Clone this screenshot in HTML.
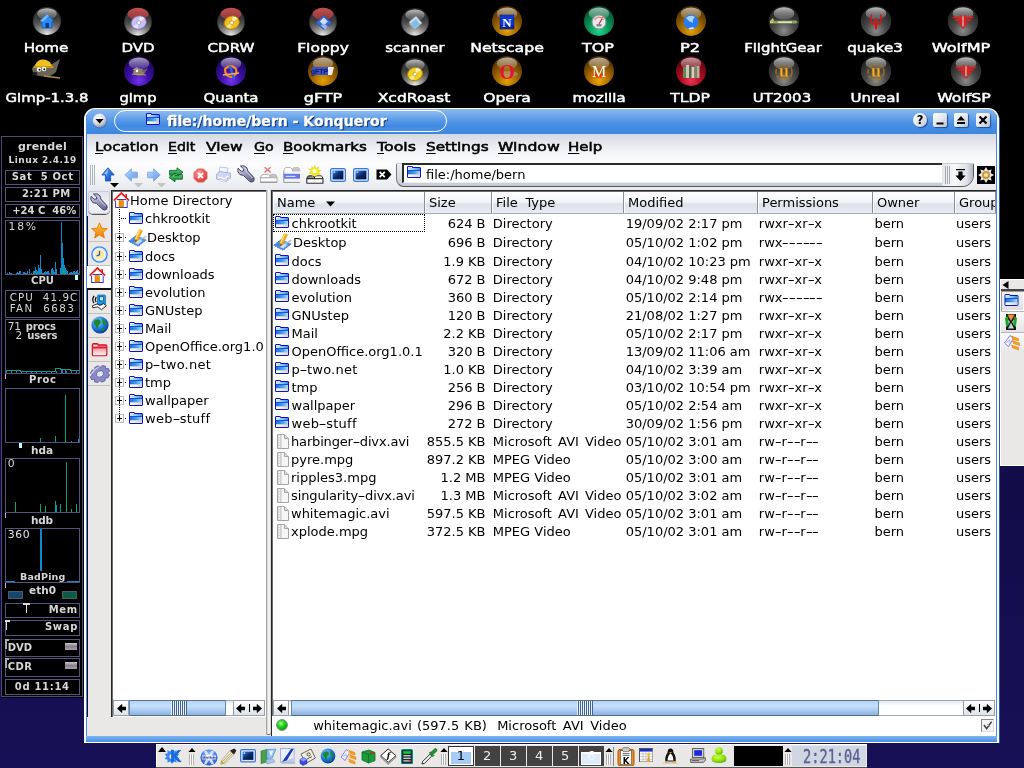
<!DOCTYPE html>
<html lang="en"><head><meta charset="utf-8"><title>file:/home/bern - Konqueror</title>
<style>
html,body{margin:0;padding:0}
body{width:1024px;height:768px;overflow:hidden;position:relative;background:#000;font-family:"DejaVu Sans","Liberation Sans",sans-serif;font-size:13px;color:#000}
.abs{position:absolute}
#root{position:absolute;left:0;top:0;width:1024px;height:768px;overflow:hidden;will-change:transform}
#desk{position:absolute;left:0;top:0;width:1024px;height:768px;background:linear-gradient(to bottom,#000 0,#000 285px,#0c0836 380px,#120c48 470px,#171056 768px)}
.dl{position:absolute;width:120px;text-align:center;color:#fff;font:12.3px "DejaVu Sans","Liberation Sans",sans-serif;-webkit-text-stroke:.45px #fff;line-height:14px;white-space:nowrap;transform:scaleX(1.08);transform-origin:50% 50%}
.di{position:absolute;width:32px;height:32px}
#gk{position:absolute;left:0;top:134px;width:84px;height:564px;background:linear-gradient(to right,transparent 0,transparent 1px,#000 1px,#000 100%);}
#gk .ob{position:absolute;left:1px;top:2px;width:82px;height:561px;border:1px solid #4c4a74;box-sizing:border-box}
.gb{position:absolute;left:5px;width:75px;border:1px solid #55527e;box-sizing:border-box;background:#000;overflow:hidden}
.gt{position:absolute;left:0;width:84px;text-align:center;color:#d6d6d6;font:bold 11px "DejaVu Sans","Liberation Sans",sans-serif;line-height:12px;white-space:pre;letter-spacing:.6px}
.gtl{position:absolute;color:#d6d6d6;font:bold 11px "DejaVu Sans","Liberation Sans",sans-serif;line-height:12px;white-space:pre;letter-spacing:.6px}
.gx{position:absolute;white-space:pre}
#win{position:absolute;left:84px;top:108px;width:915px;height:635px;background:#fff;border-radius:11px 11px 0 0;}
#win .inner{position:absolute;left:2px;top:1px;width:911px;height:633px;background:#eae8e6;border-radius:9px 9px 0 0;overflow:hidden}
#tbar{position:absolute;left:0;top:0;width:911px;height:25px;background:linear-gradient(to bottom,#8ab8ee 0,#6aa4ea 30%,#4a90e4 60%,#3a86e2 100%)}
#pill{position:absolute;left:28px;top:1px;width:331px;height:20px;border:1.6px solid #fff;border-radius:11px;background:linear-gradient(to bottom,#8fbcf0 0,#5a9ae8 45%,#4088e2 75%,#4a90e6 100%)}
.ft{position:absolute;white-space:pre;transform-origin:0 0;line-height:16px}
#mbar{position:absolute;left:1px;top:25px;width:910px;height:57px;background:linear-gradient(to bottom,#d4d8e0 0,#e4e6ec 8px,#f6f7f9 20px,#fcfcfd 30px,#f4f5f7 42px,#e6e8ee 57px)}
.lframe{position:absolute;left:0;top:0;width:1px;height:633px;background:#4a8ae0}
.rframe{position:absolute;left:910px;top:0;width:1px;height:633px;background:#4a8ae0}
.bframe{position:absolute;left:0;top:627px;width:911px;height:6px;background:linear-gradient(to bottom,#7cb6f2,#4a8fe2)}
.lv{position:absolute;background:#fff;}
.row{position:absolute;white-space:pre;line-height:16px;font-size:13px}
.hd{position:absolute;top:0;height:22px;box-sizing:border-box;border-right:1px solid #8a8e96;border-left:1px solid #fff;background:linear-gradient(to bottom,#fff 0,#f2f4f8 45%,#dde2ea 55%,#e8ecf2 100%);font-size:13px;line-height:21px;padding-left:3px;white-space:pre;overflow:hidden}
#kick{position:absolute;left:156px;top:744px;width:711px;height:24px;background:#eae8e6;box-shadow:inset 1px 1px 0 #fff;border-bottom:1px solid #555;box-sizing:border-box;overflow:hidden}
.pg{position:absolute;top:2px;height:20px;background:#424242;color:#eee;font:13px "DejaVu Sans","Liberation Sans",sans-serif;line-height:19px;text-align:center}
#ext{position:absolute;left:1000px;top:279px;width:24px;height:187px;background:#eae8e6;box-shadow:inset 1px 1px 0 #fff;border-bottom:1px solid #fff;box-sizing:border-box;overflow:hidden}
.hy{display:inline-block;width:6.7px;text-align:center;transform:scaleX(1.5)}
.hn{display:inline-block;width:7px;text-align:center;transform:scaleX(1.7);letter-spacing:0}

</style></head>
<body>
<div id="root">
<svg width="0" height="0" style="position:absolute" aria-hidden="true">
<defs>
<radialGradient id="sgGray" cx="50%" cy="82%" r="78%"><stop offset="0" stop-color="#8c8c8c"/><stop offset=".42" stop-color="#4a4a4a"/><stop offset="1" stop-color="#1a1a1a"/></radialGradient>
<radialGradient id="sgGlass" cx="50%" cy="50%" r="50%"><stop offset="0" stop-color="#161616"/><stop offset=".6" stop-color="#242424"/><stop offset=".85" stop-color="#3c3c3c"/><stop offset="1" stop-color="#222"/></radialGradient>
<radialGradient id="sgGold" cx="50%" cy="82%" r="78%"><stop offset="0" stop-color="#e4a400"/><stop offset=".42" stop-color="#a66a00"/><stop offset="1" stop-color="#482a00"/></radialGradient>
<radialGradient id="sgPurple" cx="50%" cy="82%" r="78%"><stop offset="0" stop-color="#7434ec"/><stop offset=".42" stop-color="#3e10ac"/><stop offset="1" stop-color="#18044c"/></radialGradient>
<radialGradient id="sgGreen" cx="50%" cy="82%" r="78%"><stop offset="0" stop-color="#20d890"/><stop offset=".42" stop-color="#0a985a"/><stop offset="1" stop-color="#044c2c"/></radialGradient>
<radialGradient id="sgRed" cx="50%" cy="82%" r="78%"><stop offset="0" stop-color="#e83656"/><stop offset=".42" stop-color="#b60c20"/><stop offset="1" stop-color="#4c040c"/></radialGradient>
<radialGradient id="sgOrange" cx="50%" cy="82%" r="78%"><stop offset="0" stop-color="#eca800"/><stop offset=".42" stop-color="#b06c00"/><stop offset="1" stop-color="#482a00"/></radialGradient>
<radialGradient id="glow" cx="50%" cy="100%" r="75%"><stop offset="0" stop-color="#fff" stop-opacity=".32"/><stop offset=".55" stop-color="#fff" stop-opacity=".08"/><stop offset="1" stop-color="#fff" stop-opacity="0"/></radialGradient>
<radialGradient id="gglow" cx="50%" cy="100%" r="78%"><stop offset="0" stop-color="#f0f0f0" stop-opacity="1"/><stop offset=".4" stop-color="#b8b8b8" stop-opacity=".7"/><stop offset="1" stop-color="#888" stop-opacity="0"/></radialGradient>
<linearGradient id="hlGray" x1="0" y1="0" x2="0" y2="1"><stop offset="0" stop-color="#c4c4c4" stop-opacity=".95"/><stop offset="1" stop-color="#8a8a8a" stop-opacity=".35"/></linearGradient>
<linearGradient id="hl" x1="0" y1="0" x2="0" y2="1"><stop offset="0" stop-color="#fff" stop-opacity=".62"/><stop offset="1" stop-color="#fff" stop-opacity=".1"/></linearGradient>
<linearGradient id="hlRed" x1="0" y1="0" x2="0" y2="1"><stop offset="0" stop-color="#c45050" stop-opacity="1"/><stop offset="1" stop-color="#a83a3a" stop-opacity=".8"/></linearGradient>
<linearGradient id="fold1" x1="0" y1="0" x2="1" y2="0"><stop offset="0" stop-color="#1a6ae0"/><stop offset=".55" stop-color="#4aa0f0"/><stop offset="1" stop-color="#b8e0ff"/></linearGradient>
<linearGradient id="fold2" x1="0" y1="0" x2="1" y2="0"><stop offset="0" stop-color="#fff"/><stop offset="1" stop-color="#d8d4c0"/></linearGradient>
<linearGradient id="fold3" x1="0" y1="0" x2="1" y2="0"><stop offset="0" stop-color="#d8ecff"/><stop offset=".5" stop-color="#8cc4f8"/><stop offset="1" stop-color="#3a8ae8"/></linearGradient>
<symbol id="folder" viewBox="0 0 16 16">
<path d="M1.5 12 L1.5 2 Q1.5 1.5 2 1.5 L6 1.5 Q6.5 1.5 6.5 2 L6.5 2.5 L14 2.5 Q14.5 2.5 14.5 3 L14.5 12 Q14.5 12.5 14 12.5 L2 12.5 Q1.5 12.5 1.5 12 Z" fill="url(#fold1)" stroke="#1212c0" stroke-width="1"/>
<rect x="2" y="2" width="4" height="1.2" fill="#d8ecff"/>
<rect x="2" y="3" width="12" height="2" fill="url(#fold3)"/>
<rect x="2" y="5" width="12" height="1" fill="#1a50d4"/>
<rect x="2" y="9.3" width="12" height="2.7" fill="url(#fold2)"/>
</symbol>
<symbol id="file" viewBox="0 0 16 16">
<path d="M3.5 1.5 L10.5 1.5 L14.5 5.5 L14.5 15.5 L3.5 15.5 Z" fill="#f6f6f6" stroke="#a4a4a4" stroke-width="1"/>
<path d="M10.5 1.5 L10.5 5.5 L14.5 5.5" fill="#dcdcdc" stroke="#a4a4a4" stroke-width="1"/>
<rect x="4" y="2" width="2.6" height="13" fill="#d4d4d4"/>
<path d="M5.3 2.6 V15" stroke="#fff" stroke-width="1.2" stroke-dasharray="1.4 1.2"/>
<rect x="6.6" y="2" width=".8" height="13" fill="#b8b8b8"/>
</symbol>
</defs>
</svg>
<div id="desk"></div>
<svg class="abs" style="left:28.5px;top:3.3000000000000007px" width="36" height="36" viewBox="0 0 36 36"><circle cx="18.0" cy="18.0" r="14.3" fill="url(#sgGlass)"/><circle cx="18.0" cy="18.0" r="13.9" fill="url(#gglow)"/><ellipse cx="18.0" cy="10.85" rx="9.8098" ry="5.720000000000001" fill="url(#hlGray)"/><g transform="translate(18 19)"><path d="M-7 -1 L0 -8 L7 -1 L5 -1 L5 6 L-5 6 L-5 -1 Z" fill="#2a8af0" stroke="#1058c0" stroke-width=".8"/><path d="M-7 -1 L0 -8 L2 -6 L-4 0 Z" fill="#6ab8ff"/><rect x="-1.5" y="1" width="3.5" height="5" fill="#0a3a90"/></g></svg>
<div class="dl" style="left:-14.0px;top:41.0px;transform:scaleX(1.230)">Home</div>
<svg class="abs" style="left:120.30000000000001px;top:3.6999999999999993px" width="36" height="36" viewBox="0 0 36 36"><circle cx="18.0" cy="18.0" r="14" fill="url(#sgGlass)"/><circle cx="18.0" cy="18.0" r="13.6" fill="url(#gglow)"/><ellipse cx="18.0" cy="10.0" rx="10.485999999999999" ry="6.16" fill="url(#hlRed)"/><g transform="translate(18.8 18.6) rotate(-20) scale(1 .86)"><circle r="7.6" fill="#c8c0f0" stroke="#8078c0" stroke-width="1"/><path d="M0 0 L7 -2 A7 7 0 0 0 3 -6.3 Z" fill="#fff" opacity=".7"/><path d="M0 0 L-7 2 A7 7 0 0 0 -3 6.3 Z" fill="#fff" opacity=".5"/><circle r="2" fill="#fff" stroke="#8078c0" stroke-width=".6"/></g></svg>
<div class="dl" style="left:77.5px;top:41.0px;transform:scaleX(1.223)">DVD</div>
<svg class="abs" style="left:212.8px;top:3.6999999999999993px" width="36" height="36" viewBox="0 0 36 36"><circle cx="18.0" cy="18.0" r="14" fill="url(#sgGlass)"/><circle cx="18.0" cy="18.0" r="13.6" fill="url(#gglow)"/><ellipse cx="18.0" cy="10.0" rx="10.485999999999999" ry="6.16" fill="url(#hlRed)"/><g transform="translate(18.8 18.6) rotate(-20) scale(1 .86)"><circle r="7.6" fill="#f0c020" stroke="#b08000" stroke-width="1"/><path d="M0 0 L7 -2 A7 7 0 0 0 3 -6.3 Z" fill="#fff" opacity=".7"/><path d="M0 0 L-7 2 A7 7 0 0 0 -3 6.3 Z" fill="#fff" opacity=".5"/><circle r="2" fill="#fff" stroke="#b08000" stroke-width=".6"/></g></svg>
<div class="dl" style="left:171.0px;top:41.0px;transform:scaleX(1.226)">CDRW</div>
<svg class="abs" style="left:305.3px;top:3.6999999999999993px" width="36" height="36" viewBox="0 0 36 36"><circle cx="18.0" cy="18.0" r="14" fill="url(#sgGlass)"/><circle cx="18.0" cy="18.0" r="13.6" fill="url(#gglow)"/><ellipse cx="18.0" cy="10.0" rx="10.485999999999999" ry="6.16" fill="url(#hlRed)"/><g transform="translate(18.8 18.6)"><path d="M-8 0 L0 -7 L8 0 L0 7 Z" fill="#3a6ad8" stroke="#2040a0" stroke-width=".6"/><path d="M-4 -1 L0 -5 L4 -1 L0 3 Z" fill="#d0e0ff"/><path d="M-3 3 L1 7 L4 4 L0 1 Z" fill="#9ab8f0"/></g></svg>
<div class="dl" style="left:262.7px;top:41.0px;transform:scaleX(1.264)">Floppy</div>
<svg class="abs" style="left:396.5px;top:3.5px" width="36" height="36" viewBox="0 0 36 36"><circle cx="18.0" cy="18.0" r="14" fill="url(#sgGlass)"/><circle cx="18.0" cy="18.0" r="13.6" fill="url(#gglow)"/><ellipse cx="18.0" cy="11.0" rx="9.604" ry="5.6000000000000005" fill="url(#hlGray)"/><g transform="translate(18 19)"><path d="M-6 -1 L1 -7 L7 0 L0 6 Z" fill="#d8e0e8" stroke="#8090a0" stroke-width=".6"/><path d="M-4 0 L1 -4 L5 1 L0 5 Z" fill="#7ac0e8"/><path d="M-6 -1 L0 6 L0 8 L-6 1 Z" fill="#a0a8b0"/></g></svg>
<div class="dl" style="left:354.6px;top:41.0px;transform:scaleX(1.214)">scanner</div>
<svg class="abs" style="left:489.0px;top:3.0px" width="36" height="36" viewBox="0 0 36 36"><circle cx="18.0" cy="18.0" r="15" fill="url(#sgGold)"/><ellipse cx="18.0" cy="10.5" rx="10.29" ry="6.0" fill="url(#hl)"/><g transform="translate(18 19)"><rect x="-7" y="-7" width="14" height="14" fill="#1038d0" stroke="#08208a" stroke-width=".6"/><rect x="-7" y="3" width="14" height="4" fill="#0a2498"/><text x="0" y="4.5" text-anchor="middle" font-family="Liberation Serif,serif" font-weight="bold" font-size="13" fill="#fff">N</text></g></svg>
<div class="dl" style="left:446.7px;top:41.0px;transform:scaleX(1.278)">Netscape</div>
<svg class="abs" style="left:581.0px;top:3.0px" width="36" height="36" viewBox="0 0 36 36"><circle cx="18.0" cy="18.0" r="15" fill="url(#sgGreen)"/><ellipse cx="18.0" cy="10.5" rx="10.29" ry="6.0" fill="url(#hl)"/><g transform="translate(18 19)"><circle r="7" fill="#e8e8e8" stroke="#909090" stroke-width="1"/><path d="M0 2 L4 -5" stroke="#d03030" stroke-width="1.2"/><path d="M-4.5 -2 A5 5 0 0 1 4.5 -2" fill="none" stroke="#e09090" stroke-width="1.4"/><rect x="-2.5" y="2" width="5" height="2.5" fill="#8088a0"/></g></svg>
<div class="dl" style="left:538.4px;top:41.0px;transform:scaleX(1.296)">TOP</div>
<svg class="abs" style="left:672.7px;top:3.0px" width="36" height="36" viewBox="0 0 36 36"><circle cx="18.0" cy="18.0" r="15" fill="url(#sgGold)"/><ellipse cx="18.0" cy="10.5" rx="10.29" ry="6.0" fill="url(#hl)"/><g transform="translate(18 19)"><circle r="7.5" fill="#2a7af0"/><path d="M-5 -4 Q-1 -8 4 -5 Q1 -2 2 1 Q-2 0 -5 -4 Z" fill="#a8d8ff"/><path d="M-3 7 Q0 4 4 6 Q1 8 -3 7Z" fill="#e0f0ff"/></g></svg>
<div class="dl" style="left:630.0px;top:41.0px;transform:scaleX(1.325)">P2</div>
<svg class="abs" style="left:765.5px;top:3.0px" width="36" height="36" viewBox="0 0 36 36"><circle cx="18.0" cy="18.0" r="15.2" fill="url(#sgGray)"/><ellipse cx="18.0" cy="10.4" rx="10.4272" ry="6.08" fill="url(#hlGray)"/><g transform="translate(18 19)"><path d="M-14 -1 L12 -1.5 L14 0 L12 1.5 L-14 1.5 Z" fill="#88a860"/><path d="M-14 -1 L-11 -4 L-10 -1Z" fill="#c8c060"/><rect x="-6" y="-.5" width="14" height="1.4" fill="#e8e8c8"/><rect x="-14" y="-.6" width="3" height="1.6" fill="#e0d040"/></g></svg>
<div class="dl" style="left:722.7px;top:41.0px;transform:scaleX(1.214)">FlightGear</div>
<svg class="abs" style="left:857.5px;top:3.0px" width="36" height="36" viewBox="0 0 36 36"><circle cx="18.0" cy="18.0" r="15.2" fill="url(#sgGray)"/><ellipse cx="18.0" cy="10.4" rx="10.4272" ry="6.08" fill="url(#hlGray)"/><g transform="translate(18 17.5)" fill="none" stroke="#e01010" stroke-width="1.6"><path d="M-4.6 -6 Q-7.4 2.6 0 4 Q7.4 2.6 4.6 -6"/><path d="M0 -2.6 L0 9" stroke-width="2"/></g></svg>
<div class="dl" style="left:815.0px;top:41.0px;transform:scaleX(1.232)">quake3</div>
<svg class="abs" style="left:944.5px;top:3.0px" width="36" height="36" viewBox="0 0 36 36"><circle cx="18.0" cy="18.0" r="15.2" fill="url(#sgGray)"/><ellipse cx="18.0" cy="10.4" rx="10.4272" ry="6.08" fill="url(#hlGray)"/><g transform="translate(18 19.3)" fill="#e41c1c"><path d="M-11 -5.5 L11 -5.5 L9.4 -3.8 L-9.4 -3.8Z"/><path d="M-8.6 -3 L8.6 -3 L7 -1.4 L-7 -1.4Z"/><path d="M-6 -.6 L6 -.6 L4.6 1 L-4.6 1Z"/><path d="M-3.2 -7 L-1.3 -7 L-1.3 4 L0 5.4 L1.3 4 L1.3 -7 L3.2 -7 L3.2 3.4 L0 6.8 L-3.2 3.4Z"/><rect x="-.5" y="-6" width="1" height="9.6" fill="#f4dcdc"/></g></svg>
<div class="dl" style="left:901.0px;top:41.0px;transform:scaleX(1.312)">WolfMP</div>
<svg class="abs" style="left:30px;top:58px" width="34" height="24" viewBox="0 0 34 24"><path d="M2 11 Q4 5 12 6 L22 6 L30 1 L26 14 Q20 20 10 18 Q3 18 2 11Z" fill="#6a6456"/><path d="M5 7 Q10 -2 20 4 L22 8 L6 9Z" fill="#f0c020"/><path d="M4 8 L23 8 L24 10 L3 10Z" fill="#c89810"/><circle cx="9" cy="11.5" r="2.3" fill="#fff"/><circle cx="14" cy="11" r="2.3" fill="#fff"/><circle cx="9.5" cy="11.8" r="1" fill="#000"/><circle cx="14.3" cy="11.3" r="1" fill="#000"/><ellipse cx="5" cy="15.5" rx="2.4" ry="1.8" fill="#222"/><path d="M14 18 L30 20" stroke="#b08848" stroke-width="1.5"/></svg>
<div class="dl" style="left:-13.5px;top:91.0px;transform:scaleX(1.215)">Gimp-1.3.8</div>
<svg class="abs" style="left:121.0px;top:53.0px" width="36" height="36" viewBox="0 0 36 36"><circle cx="18.0" cy="18.0" r="15" fill="url(#sgPurple)"/><ellipse cx="18.0" cy="10.5" rx="10.29" ry="6.0" fill="url(#hl)"/><g transform="translate(18 19)"><ellipse cx="0" cy="0" rx="6" ry="3.5" fill="#8a8068"/><path d="M-7 -2 L-2 -5 L1 -2Z" fill="#a09878"/><path d="M2 -1 L9 -4 L6 1Z" fill="#6a6250"/><circle cx="-2" cy="-1" r="1.3" fill="#fff"/><path d="M-7 2 L7 3" stroke="#c0a050" stroke-width="1"/></g></svg>
<div class="dl" style="left:78.0px;top:91.0px;transform:scaleX(1.199)">gimp</div>
<svg class="abs" style="left:213.0px;top:53.0px" width="36" height="36" viewBox="0 0 36 36"><circle cx="18.0" cy="18.0" r="15" fill="url(#sgPurple)"/><ellipse cx="18.0" cy="10.5" rx="10.29" ry="6.0" fill="url(#hl)"/><g transform="translate(18 19)"><path d="M-6 -3 Q0 -9 5 -3 Q7 3 0 5 Q-6 4 -6 -3Z" fill="none" stroke="#f09020" stroke-width="2.2"/><path d="M-1 -6 L3 7" stroke="#3060e0" stroke-width="2.4"/><path d="M-8 3 L8 1" stroke="#f0b040" stroke-width="1.6"/></g></svg>
<div class="dl" style="left:171.0px;top:91.0px;transform:scaleX(1.222)">Quanta</div>
<svg class="abs" style="left:305.0px;top:53.0px" width="36" height="36" viewBox="0 0 36 36"><circle cx="18.0" cy="18.0" r="15" fill="url(#sgGold)"/><ellipse cx="18.0" cy="10.5" rx="10.29" ry="6.0" fill="url(#hl)"/><g transform="translate(18 18)"><path d="M-11 -4 L11 -4 L9 4 L-11 4 Z" fill="#e8ecf8"/><rect x="-11" y="-4" width="16" height="8" fill="#3a52c8"/><text x="-3.5" y="2.8" text-anchor="middle" font-family="Liberation Sans,sans-serif" font-weight="bold" font-size="7" fill="#101860">gFTP</text></g></svg>
<div class="dl" style="left:262.5px;top:91.0px;transform:scaleX(1.301)">gFTP</div>
<svg class="abs" style="left:396.5px;top:53.5px" width="36" height="36" viewBox="0 0 36 36"><circle cx="18.0" cy="18.0" r="14" fill="url(#sgGlass)"/><circle cx="18.0" cy="18.0" r="13.6" fill="url(#gglow)"/><ellipse cx="18.0" cy="11.0" rx="9.604" ry="5.6000000000000005" fill="url(#hlGray)"/><g transform="translate(18 20) rotate(-20) scale(1 .86)"><circle r="7.6" fill="#f0d020" stroke="#b08000" stroke-width="1"/><path d="M0 0 L7 -2 A7 7 0 0 0 3 -6.3 Z" fill="#fff" opacity=".7"/><path d="M0 0 L-7 2 A7 7 0 0 0 -3 6.3 Z" fill="#fff" opacity=".5"/><circle r="2" fill="#fff" stroke="#b08000" stroke-width=".6"/></g></svg>
<div class="dl" style="left:353.7px;top:91.0px;transform:scaleX(1.269)">XcdRoast</div>
<svg class="abs" style="left:489.0px;top:53.0px" width="36" height="36" viewBox="0 0 36 36"><circle cx="18.0" cy="18.0" r="15" fill="url(#sgGold)"/><ellipse cx="18.0" cy="10.5" rx="10.29" ry="6.0" fill="url(#hl)"/><g transform="translate(18 19)"><ellipse cx="2" cy="2" rx="9" ry="3" fill="#a0a0b0" opacity=".5"/><text x="0" y="7" text-anchor="middle" font-family="Liberation Serif,serif" font-weight="bold" font-size="20" fill="#e81030">O</text></g></svg>
<div class="dl" style="left:447.0px;top:91.0px;transform:scaleX(1.267)">Opera</div>
<svg class="abs" style="left:581.0px;top:53.0px" width="36" height="36" viewBox="0 0 36 36"><circle cx="18.0" cy="18.0" r="15" fill="url(#sgOrange)"/><ellipse cx="18.0" cy="10.5" rx="10.29" ry="6.0" fill="url(#hl)"/><g transform="translate(18 19)"><path d="M-7 3 Q-3 0 0 2.6 Q4 0 7 3 Q4 6.4 0 5.6 Q-4 6.4 -7 3Z" fill="#e83808"/><text x="0" y="5" text-anchor="middle" font-family="Liberation Serif,serif" font-size="16" fill="#fff">M</text></g></svg>
<div class="dl" style="left:538.5px;top:91.0px;transform:scaleX(1.216)">mozilla</div>
<svg class="abs" style="left:673.0px;top:53.0px" width="36" height="36" viewBox="0 0 36 36"><circle cx="18.0" cy="18.0" r="15" fill="url(#sgRed)"/><ellipse cx="18.0" cy="10.5" rx="10.29" ry="6.0" fill="url(#hl)"/><g transform="translate(18 19)"><rect x="-8" y="-5" width="3" height="11" fill="#5a8a60"/><rect x="-5" y="-7" width="3" height="13" fill="#c8c8b0"/><rect x="-2" y="-6" width="2.5" height="12" fill="#486850"/><rect x=".5" y="-5" width="3" height="11" fill="#d8d0b8"/><rect x="3.5" y="-7" width="2.5" height="13" fill="#708870"/><rect x="6" y="-6" width="2.5" height="12" fill="#b8b098"/></g></svg>
<div class="dl" style="left:630.0px;top:91.0px;transform:scaleX(1.270)">TLDP</div>
<svg class="abs" style="left:765.5px;top:53.0px" width="36" height="36" viewBox="0 0 36 36"><circle cx="18.0" cy="18.0" r="15.2" fill="url(#sgGray)"/><ellipse cx="18.0" cy="10.4" rx="10.4272" ry="6.08" fill="url(#hlGray)"/><g transform="translate(18 19)"><circle r="8" fill="none" stroke="#b07818" stroke-width="1.6" stroke-dasharray="5 2 3 1.5" opacity=".75"/><text x="0" y="5.4" text-anchor="middle" font-family="Liberation Serif,serif" font-weight="bold" font-size="18" fill="#f0b028" stroke="#a86808" stroke-width=".5">u</text></g></svg>
<div class="dl" style="left:722.4px;top:91.0px;transform:scaleX(1.224)">UT2003</div>
<svg class="abs" style="left:857.5px;top:53.0px" width="36" height="36" viewBox="0 0 36 36"><circle cx="18.0" cy="18.0" r="15.2" fill="url(#sgGray)"/><ellipse cx="18.0" cy="10.4" rx="10.4272" ry="6.08" fill="url(#hlGray)"/><g transform="translate(18 19)"><circle r="8" fill="none" stroke="#b07818" stroke-width="1.6" stroke-dasharray="5 2 3 1.5" opacity=".75"/><text x="0" y="5.4" text-anchor="middle" font-family="Liberation Serif,serif" font-weight="bold" font-size="18" fill="#f0b028" stroke="#a86808" stroke-width=".5">u</text></g></svg>
<div class="dl" style="left:814.5px;top:91.0px;transform:scaleX(1.227)">Unreal</div>
<svg class="abs" style="left:947.5px;top:53.0px" width="36" height="36" viewBox="0 0 36 36"><circle cx="18.0" cy="18.0" r="15.2" fill="url(#sgGray)"/><ellipse cx="18.0" cy="10.4" rx="10.4272" ry="6.08" fill="url(#hlGray)"/><g transform="translate(18 19.3)" fill="#e41c1c"><path d="M-11 -5.5 L11 -5.5 L9.4 -3.8 L-9.4 -3.8Z"/><path d="M-8.6 -3 L8.6 -3 L7 -1.4 L-7 -1.4Z"/><path d="M-6 -.6 L6 -.6 L4.6 1 L-4.6 1Z"/><path d="M-3.2 -7 L-1.3 -7 L-1.3 4 L0 5.4 L1.3 4 L1.3 -7 L3.2 -7 L3.2 3.4 L0 6.8 L-3.2 3.4Z"/><rect x="-.5" y="-6" width="1" height="9.6" fill="#f4dcdc"/></g></svg>
<div class="dl" style="left:903.7px;top:91.0px;transform:scaleX(1.280)">WolfSP</div>
<div id="gk"><div class="ob"></div>
<div class="gb" style="top:36px;height:15px"></div>
<div class="gb" style="top:53px;height:15px"></div>
<div class="gb" style="top:70px;height:14px"></div>
<div class="gb" style="top:86px;height:55px"><svg class="abs" style="left:0;top:0" width="73" height="53" viewBox="0 0 73 53" shape-rendering="crispEdges"><rect x="1" y="52" width="1" height="1" fill="#1088d0"/><rect x="3" y="51" width="1" height="2" fill="#1088d0"/><rect x="4" y="52" width="1" height="1" fill="#1088d0"/><rect x="5" y="52" width="1" height="1" fill="#1088d0"/><rect x="10" y="52" width="1" height="1" fill="#1088d0"/><rect x="11" y="51" width="1" height="2" fill="#1088d0"/><rect x="12" y="52" width="1" height="1" fill="#1088d0"/><rect x="13" y="50" width="1" height="3" fill="#1088d0"/><rect x="14" y="50" width="1" height="3" fill="#1088d0"/><rect x="17" y="51" width="1" height="2" fill="#1088d0"/><rect x="18" y="51" width="1" height="2" fill="#1088d0"/><rect x="19" y="52" width="1" height="1" fill="#1088d0"/><rect x="20" y="52" width="1" height="1" fill="#1088d0"/><rect x="21" y="50" width="1" height="3" fill="#1088d0"/><rect x="23" y="50" width="1" height="3" fill="#1088d0"/><rect x="25" y="52" width="1" height="1" fill="#1088d0"/><rect x="28" y="50" width="1" height="3" fill="#1088d0"/><rect x="29" y="51" width="1" height="2" fill="#1088d0"/><rect x="30" y="50" width="1" height="3" fill="#1088d0"/><rect x="31" y="52" width="1" height="1" fill="#1088d0"/><rect x="32" y="50" width="1" height="3" fill="#1088d0"/><rect x="33" y="52" width="1" height="1" fill="#1088d0"/><rect x="36" y="52" width="1" height="1" fill="#1088d0"/><rect x="37" y="52" width="1" height="1" fill="#1088d0"/><rect x="38" y="51" width="1" height="2" fill="#1088d0"/><rect x="39" y="50" width="1" height="3" fill="#1088d0"/><rect x="40" y="51" width="1" height="2" fill="#1088d0"/><rect x="41" y="50" width="1" height="3" fill="#1088d0"/><rect x="42" y="50" width="1" height="3" fill="#1088d0"/><rect x="43" y="52" width="1" height="1" fill="#1088d0"/><rect x="45" y="50" width="1" height="3" fill="#1088d0"/><rect x="46" y="51" width="1" height="2" fill="#1088d0"/><rect x="47" y="52" width="1" height="1" fill="#1088d0"/><rect x="48" y="51" width="1" height="2" fill="#1088d0"/><rect x="49" y="52" width="1" height="1" fill="#1088d0"/><rect x="50" y="51" width="1" height="2" fill="#1088d0"/><rect x="54" y="52" width="1" height="1" fill="#1088d0"/><rect x="55" y="52" width="1" height="1" fill="#1088d0"/><rect x="57" y="50" width="1" height="3" fill="#1088d0"/><rect x="58" y="50" width="1" height="3" fill="#1088d0"/><rect x="59" y="51" width="1" height="2" fill="#1088d0"/><rect x="60" y="50" width="1" height="3" fill="#1088d0"/><rect x="61" y="52" width="1" height="1" fill="#1088d0"/><rect x="63" y="52" width="1" height="1" fill="#1088d0"/><rect x="64" y="51" width="1" height="2" fill="#1088d0"/><rect x="65" y="51" width="1" height="2" fill="#1088d0"/><rect x="66" y="52" width="1" height="1" fill="#1088d0"/><rect x="67" y="50" width="1" height="3" fill="#1088d0"/><rect x="68" y="50" width="1" height="3" fill="#1088d0"/><rect x="69" y="51" width="1" height="2" fill="#1088d0"/><rect x="71" y="52" width="1" height="1" fill="#1088d0"/><rect x="72" y="52" width="1" height="1" fill="#1088d0"/><rect x="73" y="51" width="1" height="2" fill="#1088d0"/><rect x="23" y="48" width="1" height="5" fill="#1088d0"/><rect x="29" y="46" width="1" height="7" fill="#1088d0"/><rect x="30" y="49" width="1" height="4" fill="#1088d0"/><rect x="32" y="44" width="1" height="9" fill="#1088d0"/><rect x="33" y="47" width="1" height="6" fill="#1088d0"/><rect x="34" y="34" width="1" height="19" fill="#1088d0"/><rect x="35" y="48" width="1" height="5" fill="#1088d0"/><rect x="39" y="50" width="1" height="3" fill="#1088d0"/><rect x="45" y="48" width="1" height="5" fill="#1088d0"/><rect x="46" y="47" width="1" height="6" fill="#1088d0"/><rect x="47" y="49" width="1" height="4" fill="#1088d0"/><rect x="49" y="41" width="1" height="12" fill="#1088d0"/><rect x="50" y="48" width="1" height="5" fill="#1088d0"/><rect x="54" y="47" width="1" height="6" fill="#1088d0"/><rect x="55" y="1" width="1" height="52" fill="#1088d0"/><rect x="56" y="22" width="1" height="31" fill="#1088d0"/><rect x="57" y="37" width="1" height="16" fill="#1088d0"/><rect x="58" y="44" width="1" height="9" fill="#1088d0"/><rect x="59" y="47" width="1" height="6" fill="#1088d0"/><rect x="60" y="49" width="1" height="4" fill="#1088d0"/><rect x="61" y="50" width="1" height="3" fill="#1088d0"/><rect x="70" y="50" width="1" height="3" fill="#1088d0"/><rect x="71" y="49" width="1" height="4" fill="#1088d0"/><rect x="73" y="42" width="1" height="11" fill="#1088d0"/><rect x="27" y="50" width="1" height="3" fill="#0aa47c"/><rect x="31" y="50" width="1" height="3" fill="#0aa47c"/><rect x="34" y="51" width="1" height="2" fill="#0aa47c"/><rect x="50" y="51" width="1" height="2" fill="#0aa47c"/><rect x="56" y="48" width="1" height="5" fill="#0aa47c"/><rect x="57" y="49" width="1" height="4" fill="#0aa47c"/><rect x="58" y="50" width="1" height="3" fill="#0aa47c"/><rect x="59" y="50" width="1" height="3" fill="#0aa47c"/><rect x="69" y="51" width="1" height="2" fill="#0aa47c"/></svg></div>
<div class="abs" style="left:75px;top:141px;width:3px;height:5px;background:#bff"></div><div class="gb" style="top:156px;height:28px"></div>
<div class="gb" style="top:185px;height:55px"><svg class="abs" style="left:0;top:0" width="73" height="53" viewBox="0 0 73 53" shape-rendering="crispEdges"><path d="M0 50.5 H14 V51.5 H49 V48.5 H54 V49.5 H64 V50.5 H73" fill="none" stroke="#0aa47c" stroke-width="1"/><rect x="0" y="51" width="1" height="2" fill="#1088d0"/><rect x="5" y="51" width="1" height="2" fill="#1088d0"/><rect x="10" y="51" width="1" height="2" fill="#1088d0"/><rect x="15" y="51" width="1" height="2" fill="#1088d0"/><rect x="20" y="51" width="1" height="2" fill="#1088d0"/><rect x="25" y="51" width="1" height="2" fill="#1088d0"/><rect x="30" y="51" width="1" height="2" fill="#1088d0"/><rect x="35" y="51" width="1" height="2" fill="#1088d0"/><rect x="40" y="51" width="1" height="2" fill="#1088d0"/><rect x="45" y="51" width="1" height="2" fill="#1088d0"/><rect x="50" y="51" width="1" height="2" fill="#1088d0"/><rect x="55" y="51" width="1" height="2" fill="#1088d0"/><rect x="60" y="51" width="1" height="2" fill="#1088d0"/><rect x="65" y="51" width="1" height="2" fill="#1088d0"/><rect x="70" y="51" width="1" height="2" fill="#1088d0"/><rect x="55" y="49" width="2" height="4" fill="#1088d0"/><rect x="59" y="50" width="1" height="3" fill="#1088d0"/></svg></div>
<div class="abs" style="left:5px;top:240px;width:1px;height:5px;background:#d8a0d8"></div><div class="gb" style="top:254px;height:55px"><svg class="abs" style="left:0;top:0" width="73" height="53" viewBox="0 0 73 53" shape-rendering="crispEdges"><rect x="59" y="6" width="1" height="47" fill="#0aa47c"/><rect x="34" y="49" width="1" height="4" fill="#0aa47c"/><rect x="49" y="47" width="1" height="6" fill="#0aa47c"/><rect x="65" y="52" width="1" height="1" fill="#0aa47c"/><rect x="72" y="50" width="1" height="3" fill="#1088d0"/></svg></div>
<div class="abs" style="left:19px;top:309px;width:3px;height:5px;background:#bff"></div><div class="gb" style="top:324px;height:55px"><svg class="abs" style="left:0;top:0" width="73" height="53" viewBox="0 0 73 53" shape-rendering="crispEdges"><rect x="9" y="43" width="1" height="10" fill="#0aa47c"/><rect x="34" y="45" width="1" height="8" fill="#0aa47c"/><rect x="39" y="47" width="1" height="6" fill="#0aa47c"/><rect x="49" y="42" width="1" height="11" fill="#0aa47c"/><rect x="50" y="46" width="1" height="7" fill="#0aa47c"/><rect x="50" y="46" width="1" height="7" fill="#1088d0"/><rect x="54" y="45" width="1" height="8" fill="#0aa47c"/><rect x="60" y="3" width="1" height="50" fill="#0aa47c"/><rect x="65" y="50" width="1" height="3" fill="#0aa47c"/><rect x="70" y="45" width="1" height="8" fill="#0aa47c"/></svg></div>
<div class="abs" style="left:5px;top:379px;width:1px;height:5px;background:#d8a0d8"></div><div class="gb" style="top:394px;height:55px"><svg class="abs" style="left:0;top:0" width="73" height="53" viewBox="0 0 73 53" shape-rendering="crispEdges"><rect x="34" y="0" width="2" height="42" fill="#1088d0"/><rect x="0" y="52" width="9" height="1" fill="#1088d0"/><rect x="61" y="51.5" width="12" height="1.5" fill="#1088d0"/></svg></div>
<div class="abs" style="left:5px;top:449px;width:1px;height:5px;background:#d8a0d8"></div><div class="abs" style="left:8px;top:457px;width:15px;height:8px;background:#14466e;border:1px solid #4a5a6e;box-sizing:border-box"></div><div class="abs" style="left:62px;top:457px;width:15px;height:8px;background:#0e5a48;border:1px solid #4a5e5a;box-sizing:border-box"></div><div class="gb" style="top:469px;height:15px"></div>
<div class="abs" style="left:23px;top:469px;width:7px;height:1.5px;background:#ddd"></div><div class="abs" style="left:26px;top:469px;width:1px;height:10px;background:#ddd"></div><div class="gb" style="top:486px;height:16px"></div>
<div class="abs" style="left:5px;top:486px;width:5px;height:1.5px;background:#ddd"></div><div class="abs" style="left:6px;top:486px;width:1px;height:10px;background:#ddd"></div><div class="gb" style="top:505px;height:18px"></div>
<div class="abs" style="left:5px;top:505px;width:4px;height:2px;background:#aaa"></div><div class="abs" style="left:5px;top:505px;width:1.5px;height:10px;background:#aaa"></div><div class="abs" style="left:65px;top:509px;width:12px;height:7px;background:linear-gradient(#c8c4c8,#8a808a 50%,#a8a0a8);"></div><div class="gb" style="top:524px;height:19px"></div>
<div class="abs" style="left:5px;top:524px;width:4px;height:2px;background:#aaa"></div><div class="abs" style="left:5px;top:524px;width:1.5px;height:10px;background:#aaa"></div><div class="abs" style="left:65px;top:528px;width:12px;height:7px;background:linear-gradient(#c8c4c8,#8a808a 50%,#a8a0a8);"></div><div class="gb" style="top:545px;height:16px"></div>
<div class="gx" style="left:18.0px;top:7.4px;font:bold 11px 'DejaVu Sans',sans-serif;line-height:12px;letter-spacing:0.17px;color:#d6d6d6">grendel</div><div class="gx" style="left:8.6px;top:19.7px;font:bold 9px 'DejaVu Sans',sans-serif;line-height:12px;letter-spacing:0.48px;color:#d6d6d6">Linux 2.4.19</div><div class="gx" style="left:11.7px;top:36.5px;font:bold 10px 'DejaVu Sans',sans-serif;line-height:12px;letter-spacing:0.66px;color:#d6d6d6">Sat  5 Oct</div><div class="gx" style="left:21.9px;top:53.5px;font:bold 10px 'DejaVu Sans',sans-serif;line-height:12px;letter-spacing:0.46px;color:#d6d6d6">2:21 PM</div><div class="gx" style="left:12.2px;top:70.5px;font:bold 10px 'DejaVu Sans',sans-serif;line-height:12px;letter-spacing:-0.00px;color:#d6d6d6">+24 C  46%</div><div class="gx" style="left:8.6px;top:86.7px;font:10.8px 'DejaVu Sans',sans-serif;line-height:12px;letter-spacing:1.70px;color:#d6d6d6">18%</div><div class="gx" style="left:31.0px;top:141.0px;font:bold 10px 'DejaVu Sans',sans-serif;line-height:12px;letter-spacing:0.10px;color:#d6d6d6">CPU</div><div class="gx" style="left:9.7px;top:157.0px;font:10.3px 'DejaVu Sans',sans-serif;line-height:12px;letter-spacing:1.11px;color:#d6d6d6">CPU  41.9C</div><div class="gx" style="left:9.7px;top:167.9px;font:10.3px 'DejaVu Sans',sans-serif;line-height:12px;letter-spacing:1.45px;color:#d6d6d6">FAN  6683</div><div class="gx" style="left:29.0px;top:240.2px;font:bold 10px 'DejaVu Sans',sans-serif;line-height:12px;letter-spacing:0.65px;color:#d6d6d6">Proc</div><div class="gx" style="left:31.0px;top:310.1px;font:bold 10.5px 'DejaVu Sans',sans-serif;line-height:12px;letter-spacing:-0.04px;color:#d6d6d6">hda</div><div class="gx" style="left:7.8px;top:324.3px;font:10.8px 'DejaVu Sans',sans-serif;line-height:12px;letter-spacing:0.00px;color:#d6d6d6">0</div><div class="gx" style="left:31.0px;top:380.1px;font:bold 10.5px 'DejaVu Sans',sans-serif;line-height:12px;letter-spacing:-0.26px;color:#d6d6d6">hdb</div><div class="gx" style="left:7.8px;top:394.5px;font:10.8px 'DejaVu Sans',sans-serif;line-height:12px;letter-spacing:0.65px;color:#e4e4e4">360</div><div class="gx" style="left:20.0px;top:436.7px;font:bold 9.5px 'DejaVu Sans',sans-serif;line-height:12px;letter-spacing:0.18px;color:#d6d6d6">BadPing</div><div class="gx" style="left:29.0px;top:449.8px;font:bold 10.5px 'DejaVu Sans',sans-serif;line-height:12px;letter-spacing:0.03px;color:#d6d6d6">eth0</div><div class="gx" style="left:48.7px;top:470.2px;font:bold 10px 'DejaVu Sans',sans-serif;line-height:12px;letter-spacing:0.72px;color:#d6d6d6">Mem</div><div class="gx" style="left:45.0px;top:487.1px;font:bold 10px 'DejaVu Sans',sans-serif;line-height:12px;letter-spacing:0.65px;color:#d6d6d6">Swap</div><div class="gx" style="left:7.8px;top:507.5px;font:bold 10px 'DejaVu Sans',sans-serif;line-height:12px;letter-spacing:-0.07px;color:#d6d6d6">DVD</div><div class="gx" style="left:7.8px;top:527.3px;font:bold 10px 'DejaVu Sans',sans-serif;line-height:12px;letter-spacing:0.43px;color:#d6d6d6">CDR</div><div class="gx" style="left:14.8px;top:547.1px;font:bold 10px 'DejaVu Sans',sans-serif;line-height:12px;letter-spacing:0.68px;color:#d6d6d6">0d 11:14</div><div class="gx" style="left:7.8px;top:185.5px;font:bold 10px 'DejaVu Sans',sans-serif;line-height:12px;color:#d6d6d6;letter-spacing:-0.16px;word-spacing:1.65px"><span style="font:10.5px 'DejaVu Sans',sans-serif;letter-spacing:-0.18px">71</span> procs</div><div class="gx" style="left:15.6px;top:195.2px;font:bold 10px 'DejaVu Sans',sans-serif;line-height:12px;color:#d6d6d6;letter-spacing:-0.16px;word-spacing:1.68px"><span style="font:10.5px 'DejaVu Sans',sans-serif;letter-spacing:0.00px">2</span> users</div></div>
<div id="win"><div class="inner">
<div id="tbar"><div id="pill"></div></div>
<svg class="abs" style="left:6px;top:4px" width="16" height="16" viewBox="0 0 16 16"><defs><radialGradient id="mb" cx="40%" cy="30%" r="70%"><stop offset="0" stop-color="#fff"/><stop offset=".6" stop-color="#d8dce4"/><stop offset="1" stop-color="#8a94a8"/></radialGradient></defs><circle cx="8" cy="8.3" r="7.2" fill="#2a5aa0" opacity=".5"/><circle cx="7.6" cy="7.6" r="7" fill="url(#mb)"/><path d="M3.6 6 L11.6 6 L7.6 10.6Z" fill="#000"/></svg>
<svg class="abs" style="left:59px;top:3.299999999999997px" width="16" height="16"><use href="#folder"/></svg>
<div class="ft" style="left:80.7px;top:4.1px;font:bold 13.5px 'DejaVu Sans',sans-serif;line-height:16px;color:#fff;transform:scaleX(1.039);text-shadow:1px 1px 1px #0a2458;-webkit-text-stroke:.3px #fff;">file:/home/bern - Konqueror</div>
<div class="abs" style="left:827px;top:4px;width:14px;height:14px;border-radius:7px;background:linear-gradient(135deg,#fff 0,#e4e8f0 50%,#b8c0d0 100%);box-shadow:1px 1px 1px rgba(20,50,110,.7)"><svg class="abs" style="left:0;top:0" width="14" height="14" viewBox="0 0 14 14"><text x="7" y="11.3" text-anchor="middle" font-family="DejaVu Sans,sans-serif" font-weight="bold" font-size="11.5" fill="#000">?</text></svg></div>
<div class="abs" style="left:847px;top:4px;width:14px;height:14px;border-radius:2px;background:linear-gradient(135deg,#fff 0,#e4e8f0 50%,#b8c0d0 100%);box-shadow:1px 1px 1px rgba(20,50,110,.7)"><svg class="abs" style="left:0;top:0" width="14" height="14" viewBox="0 0 14 14"><rect x="3.5" y="9.5" width="7" height="2" fill="#000"/></svg></div>
<div class="abs" style="left:868px;top:4px;width:14px;height:14px;border-radius:2px;background:linear-gradient(135deg,#fff 0,#e4e8f0 50%,#b8c0d0 100%);box-shadow:1px 1px 1px rgba(20,50,110,.7)"><svg class="abs" style="left:0;top:0" width="14" height="14" viewBox="0 0 14 14"><path d="M7 3 L11 7.4 L3 7.4Z" fill="#000"/><rect x="3" y="9" width="8" height="2" fill="#000"/></svg></div>
<div class="abs" style="left:890px;top:4px;width:14px;height:14px;border-radius:2px;background:linear-gradient(135deg,#fff 0,#e4e8f0 50%,#b8c0d0 100%);box-shadow:1px 1px 1px rgba(20,50,110,.7)"><svg class="abs" style="left:0;top:0" width="14" height="14" viewBox="0 0 14 14"><path d="M3.5 3.5 L10.5 10.5 M10.5 3.5 L3.5 10.5" stroke="#000" stroke-width="2.2"/></svg></div>
<div id="mbar"></div>
<div class="ft" style="left:9.0px;top:29.7px;font:normal 12.3px 'DejaVu Sans',sans-serif;line-height:16px;color:#000;transform:scaleX(1.221);-webkit-text-stroke:.5px #000;text-decoration-thickness:1.5px;text-underline-offset:1.5px;"><u>L</u>ocation</div>
<div class="ft" style="left:81.5px;top:29.7px;font:normal 12.3px 'DejaVu Sans',sans-serif;line-height:16px;color:#000;transform:scaleX(1.146);-webkit-text-stroke:.5px #000;text-decoration-thickness:1.5px;text-underline-offset:1.5px;"><u>E</u>dit</div>
<div class="ft" style="left:120.0px;top:29.7px;font:normal 12.3px 'DejaVu Sans',sans-serif;line-height:16px;color:#000;transform:scaleX(1.254);-webkit-text-stroke:.5px #000;text-decoration-thickness:1.5px;text-underline-offset:1.5px;"><u>V</u>iew</div>
<div class="ft" style="left:167.8px;top:29.7px;font:normal 12.3px 'DejaVu Sans',sans-serif;line-height:16px;color:#000;transform:scaleX(1.155);-webkit-text-stroke:.5px #000;text-decoration-thickness:1.5px;text-underline-offset:1.5px;"><u>G</u>o</div>
<div class="ft" style="left:197.3px;top:29.7px;font:normal 12.3px 'DejaVu Sans',sans-serif;line-height:16px;color:#000;transform:scaleX(1.221);-webkit-text-stroke:.5px #000;text-decoration-thickness:1.5px;text-underline-offset:1.5px;"><u>B</u>ookmarks</div>
<div class="ft" style="left:291.0px;top:29.7px;font:normal 12.3px 'DejaVu Sans',sans-serif;line-height:16px;color:#000;transform:scaleX(1.287);-webkit-text-stroke:.5px #000;text-decoration-thickness:1.5px;text-underline-offset:1.5px;"><u>T</u>ools</div>
<div class="ft" style="left:339.7px;top:29.7px;font:normal 12.3px 'DejaVu Sans',sans-serif;line-height:16px;color:#000;transform:scaleX(1.241);-webkit-text-stroke:.5px #000;text-decoration-thickness:1.5px;text-underline-offset:1.5px;"><u>S</u>ettings</div>
<div class="ft" style="left:412.0px;top:29.7px;font:normal 12.3px 'DejaVu Sans',sans-serif;line-height:16px;color:#000;transform:scaleX(1.272);-webkit-text-stroke:.5px #000;text-decoration-thickness:1.5px;text-underline-offset:1.5px;"><u>W</u>indow</div>
<div class="ft" style="left:482.0px;top:29.7px;font:normal 12.3px 'DejaVu Sans',sans-serif;line-height:16px;color:#000;transform:scaleX(1.223);-webkit-text-stroke:.5px #000;text-decoration-thickness:1.5px;text-underline-offset:1.5px;"><u>H</u>elp</div>
<svg class="abs" style="left:4px;top:56px" width="5" height="20" viewBox="0 0 5 20"><rect x="0" y="0" width="1" height="20" fill="#b0b4bc"/><rect x="2" y="0" width="1" height="20" fill="#b0b4bc"/><rect x="4" y="0" width="1" height="20" fill="#b0b4bc"/></svg>
<svg width="0" height="0" style="position:absolute"><defs><linearGradient id="ab" x1="0" y1="0" x2="1" y2="1"><stop offset="0" stop-color="#6ab0ff"/><stop offset=".5" stop-color="#2a78e8"/><stop offset="1" stop-color="#1048b8"/></linearGradient><linearGradient id="ab2" x1="0" y1="0" x2="1" y2="1"><stop offset="0" stop-color="#c8e0ff"/><stop offset=".5" stop-color="#88b8f4"/><stop offset="1" stop-color="#6a98e0"/></linearGradient><linearGradient id="ag" x1="0" y1="0" x2="0" y2="1"><stop offset="0" stop-color="#5ad078"/><stop offset="1" stop-color="#108838"/></linearGradient><radialGradient id="ar" cx="40%" cy="35%" r="65%"><stop offset="0" stop-color="#ffa8a8"/><stop offset=".6" stop-color="#ee5a5a"/><stop offset="1" stop-color="#d83838"/></radialGradient><linearGradient id="scr" x1="0" y1="0" x2="1" y2="1"><stop offset="0" stop-color="#3a8af0"/><stop offset=".5" stop-color="#0a2a6a"/><stop offset="1" stop-color="#041030"/></linearGradient><linearGradient id="wr" x1="0" y1="0" x2="1" y2="1"><stop offset="0" stop-color="#d8d8e8"/><stop offset=".5" stop-color="#9898b8"/><stop offset="1" stop-color="#5a5a80"/></linearGradient></defs></svg><svg class="abs" style="left:15px;top:58px" width="14" height="15" viewBox="0 0 14 15"><path d="M7 .8 L13.2 8 L9.6 8 L9.6 14 L4.4 14 L4.4 8 L.8 8Z" fill="url(#ab)" stroke="#1848b0" stroke-width=".8"/><path d="M7 2.2 L3 7 L5.4 7 L5.4 10 L7 4Z" fill="#a8d4ff" opacity=".8"/></svg>
<svg class="abs" style="left:24px;top:74px" width="9" height="5" viewBox="0 0 9 5"><path d="M0 0 L9 0 L4.5 4.6Z" fill="#000"/></svg>
<svg class="abs" style="left:38px;top:59px" width="14" height="14" viewBox="0 0 14 14"><path d="M.8 7 L7.4 .8 L7.4 4.2 L13.4 4.2 L13.4 9.8 L7.4 9.8 L7.4 13.2Z" fill="url(#ab2)" stroke="#7aa4e4" stroke-width=".8"/></svg>
<svg class="abs" style="left:47.5px;top:74px" width="9" height="5" viewBox="0 0 9 5"><path d="M0 0 L9 0 L4.5 4.6Z" fill="#c4c4c4"/></svg>
<svg class="abs" style="left:61px;top:59px" width="14" height="14" viewBox="0 0 14 14"><path d="M13.2 7 L6.6 .8 L6.6 4.2 L.6 4.2 L.6 9.8 L6.6 9.8 L6.6 13.2Z" fill="url(#ab2)" stroke="#7aa4e4" stroke-width=".8"/></svg>
<svg class="abs" style="left:70.5px;top:74px" width="9" height="5" viewBox="0 0 9 5"><path d="M0 0 L9 0 L4.5 4.6Z" fill="#c4c4c4"/></svg>
<svg class="abs" style="left:82px;top:57.5px" width="16" height="16" viewBox="0 0 16 16"><path d="M1.6 8.2 L1.6 3.4 L9 3.4 L9 .8 L15 5.2 L9 9.6 L9 7 L5 7 L5 8.2Z" fill="url(#ag)" stroke="#0a5a20" stroke-width=".8"/><path d="M14.4 7.4 L14.4 12.2 L7 12.2 L7 14.8 L1 10.4 L7 6 L7 8.6 L11 8.6 L11 7.4Z" fill="url(#ag)" stroke="#0a5a20" stroke-width=".8"/></svg>
<svg class="abs" style="left:106.5px;top:58.5px" width="15" height="15" viewBox="0 0 15 15"><path d="M4.6 .8 L10.4 .8 L14.2 4.6 L14.2 10.4 L10.4 14.2 L4.6 14.2 L.8 10.4 L.8 4.6Z" fill="url(#ar)" stroke="#e89090" stroke-width=".8" stroke-linejoin="round"/><path d="M5 5 L10 10 M10 5 L5 10" stroke="#fff" stroke-width="1.9"/></svg>
<svg class="abs" style="left:129px;top:57px" width="17" height="17" viewBox="0 0 17 17"><path d="M5 1 L13 2 L12 7 L4 6Z" fill="#f4f6ff" stroke="#a8b0d8" stroke-width=".7"/><path d="M1.5 8 L5 5.5 L15.5 7 L15.5 11.5 L11 15.5 L1.5 13Z" fill="#d0d6f4" stroke="#98a0d0" stroke-width=".7"/><path d="M3 11 L10 12.6 L13 10" fill="none" stroke="#fff" stroke-width="1.2"/><path d="M4 13 L9 14.4 L12.5 11.6 L12.5 13 L9 16 L4 14.6Z" fill="#fff" stroke="#a8b0d8" stroke-width=".5"/></svg>
<svg class="abs" style="left:151px;top:56px" width="18" height="18" viewBox="0 0 18 18"><path d="M3.4 1 L7.2 .9 Q10.8 2 10.8 6 L16.8 12.4 Q18 14.8 16.2 16.6 Q14.2 17.8 12.4 16.2 L6.4 10.4 Q2.2 10.6 .9 6.8 L1 3.2 L4.2 6.2 L6.6 6 L6.6 4Z" fill="url(#wr)" stroke="#3a3a60" stroke-width=".9" stroke-linejoin="round"/><path d="M8 3 Q9.4 4.4 9.4 6.6 L15.4 13" fill="none" stroke="#f0f0fa" stroke-width="1" opacity=".8"/></svg>
<svg class="abs" style="left:173px;top:56px" width="19" height="19" viewBox="0 0 19 19"><path d="M5.6 2.2 L11.6 7.4 M11.6 2.2 L5.6 7.4" stroke="#ea7474" stroke-width="1.4"/><path d="M9.6 12.6 Q10.4 9.4 12 9.4 L16.4 9.4 Q17.6 9.4 18 12.6Z" fill="#c4c4c4" stroke="#a0a0a0" stroke-width=".6"/><path d="M1.4 12.8 Q2.2 9.4 4 9.4 L9 9.4 Q10.6 9.4 11.6 12.8Z" fill="#fff" stroke="#9a9a9a" stroke-width=".8"/><rect x="1.4" y="12.8" width="16.6" height="4.6" fill="#fafafa" stroke="#a4a4a4" stroke-width=".8"/><rect x="1.4" y="16.6" width="16.6" height="1" fill="#8a8a8a"/></svg>
<svg class="abs" style="left:197px;top:56px" width="18" height="19" viewBox="0 0 18 19"><path d="M9 6 Q9.6 2.6 11 2.6 L15.4 2.6 Q16.6 2.6 17 6Z" fill="#c8c8c8" stroke="#a8a8a8" stroke-width=".6"/><path d="M.8 6.2 Q1.4 2.6 3 2.6 L7.4 2.6 Q9 2.6 9.8 6.2" fill="#fff" stroke="#a0a0a0" stroke-width=".8"/><rect x=".8" y="8.8" width="16.2" height="5" fill="#6a76e8"/><rect x="2.6" y="10.8" width="10" height="1.2" fill="#d0d6ff"/><rect x=".8" y="13.8" width="16.2" height="3.6" fill="#f4f4f4"/><path d="M.8 6.2 L.8 17.4 L17 17.4" fill="none" stroke="#8a8a8a" stroke-width=".9"/></svg>
<svg class="abs" style="left:220px;top:55px" width="18" height="20" viewBox="0 0 18 20"><path d="M8 14.8 Q8.6 11.8 10 11.8 L15 11.8 Q16.4 11.8 17 14.8Z" fill="#fff" stroke="#111" stroke-width=".8"/><path d="M.8 14.8 Q1.4 11.8 3 11.8 L7 11.8 Q8.4 11.8 9 14.8Z" fill="#8a8a8a" stroke="#111" stroke-width=".9"/><rect x=".8" y="14.8" width="16.2" height="4.4" fill="#fff" stroke="#111" stroke-width=".9"/><path d="M8.6 1.6 L9.8 4.8 L12.6 2.8 L11.8 6 L15 6.4 L12.4 8.2 L14.2 10.8 L11 10 L10.2 13 L8.6 10.4 L6.4 12.6 L6.2 9.4 L3 9.6 L5.2 7.2 L2.8 5 L6 5.2 L5.8 2.2 L8 4.4Z" fill="#f8f020" stroke="#d8c800" stroke-width=".5"/><circle cx="8.6" cy="7.2" r="2" fill="#fffff0"/></svg>
<svg class="abs" style="left:244px;top:59px" width="16" height="14" viewBox="0 0 16 14"><rect x=".6" y=".6" width="14.8" height="12.8" rx="1.6" fill="#d8e8ff" stroke="#3a7ae0" stroke-width="1.2"/><rect x="2.6" y="2.6" width="10.8" height="8.8" fill="url(#scr)"/><rect x="3.6" y="3.4" width="1.6" height="1.4" fill="#cfe4ff"/></svg>
<svg class="abs" style="left:267px;top:59px" width="16" height="14" viewBox="0 0 16 14"><rect x=".6" y=".6" width="14.8" height="12.8" rx="1.6" fill="#d8e8ff" stroke="#3a7ae0" stroke-width="1.2"/><rect x="2.6" y="2.6" width="10.8" height="8.8" fill="url(#scr)"/><rect x="3.6" y="3.4" width="1.6" height="1.4" fill="#cfe4ff"/></svg>
<svg class="abs" style="left:290px;top:60px" width="16" height="11" viewBox="0 0 16 11"><path d="M.5 .5 L11 .5 L15.5 5.5 L11 10.5 L.5 10.5Z" fill="#000"/><path d="M3.6 2.8 L8.8 8.2 M8.8 2.8 L3.6 8.2" stroke="#fff" stroke-width="1.7"/></svg>
<div class="abs" style="left:310px;top:54px;width:578px;height:24px;box-sizing:border-box;border-radius:2px 2px 12px 8px;background:linear-gradient(to bottom,#eceef2,#c6cad2);border:1px solid #555;border-top-color:transparent;border-left-color:#777;border-bottom-width:1.5px"></div>
<div class="abs" style="left:315.5px;top:54px;width:540px;height:20px;background:#fff;border-top:2px solid #2a2a2a;border-left:2px solid #2a2a2a;border-bottom:1px solid #eee;box-sizing:border-box"></div>
<div class="abs" style="left:855.5px;top:55px;width:31.5px;height:21.5px;border-radius:0 0 10px 0;background:linear-gradient(to right,#e4e6ec 0,#f8f8fa 40%,#e0e3ea 80%,#b0b4c0 100%)"></div>
<svg class="abs" style="left:859px;top:57px" width="6" height="18" viewBox="0 0 6 18"><rect x="0" y="0" width="1" height="18" fill="#a8acb4"/><rect x="2" y="0" width="1" height="18" fill="#a8acb4"/><rect x="4" y="0" width="1" height="18" fill="#a8acb4"/></svg>
<svg class="abs" style="left:869px;top:60px" width="11" height="13" viewBox="0 0 11 13"><rect x="1" y="0" width="9" height="1.2" fill="#000"/><path d="M3.4 2.6 L7.6 2.6 L7.6 6.4 L10.6 6.4 L5.5 12 L.4 6.4 L3.4 6.4Z" fill="#000"/></svg>
<svg class="abs" style="left:319.5px;top:56.30000000000001px" width="16" height="16"><use href="#folder"/></svg>
<div class="row" style="left:340px;top:58px">file:/home/bern</div>
<svg class="abs" style="left:891px;top:57px" width="18" height="18" viewBox="0 0 18 18"><rect width="18" height="18" fill="#000"/><g transform="translate(9 9)"><path d="M0 -8 L2 -4.6 L5.6 -5.6 L4.6 -2 L8 0 L4.6 2 L5.6 5.6 L2 4.6 L0 8 L-2 4.6 L-5.6 5.6 L-4.6 2 L-8 0 L-4.6 -2 L-5.6 -5.6 L-2 -4.6Z" fill="#e8e8e8"/><circle r="4" fill="#c89838"/><circle r="2" fill="#f0e0b0"/></g></svg>
<div class="abs" style="left:2px;top:82px;width:22px;height:23px;border-radius:2px 2px 5px 5px;background:linear-gradient(to bottom,#dfe2ea,#f2f3f7 60%,#e8eaf0);box-shadow:0 1px 0 #555,inset 0 0 0 1px #c8ccd6"></div>
<svg class="abs" style="left:4px;top:84px" width="18" height="18" viewBox="0 0 18 18"><path d="M3.4 1 L7.2 .9 Q10.8 2 10.8 6 L16.8 12.4 Q18 14.8 16.2 16.6 Q14.2 17.8 12.4 16.2 L6.4 10.4 Q2.2 10.6 .9 6.8 L1 3.2 L4.2 6.2 L6.6 6 L6.6 4Z" fill="url(#wr)" stroke="#3a3a60" stroke-width=".9" stroke-linejoin="round"/><path d="M8 3 Q9.4 4.4 9.4 6.6 L15.4 13" fill="none" stroke="#f0f0fa" stroke-width="1" opacity=".8"/></svg>
<div class="abs" style="left:1px;top:107px;width:1px;height:501px;background:#111"></div>
<div class="abs" style="left:2px;top:132px;width:22px;height:1px;background:#c4c2c0"></div>
<div class="abs" style="left:2px;top:156px;width:22px;height:1px;background:#c4c2c0"></div>
<div class="abs" style="left:2px;top:179px;width:22px;height:1px;background:#c4c2c0"></div>
<div class="abs" style="left:2px;top:204px;width:22px;height:1px;background:#c4c2c0"></div>
<div class="abs" style="left:2px;top:228px;width:22px;height:1px;background:#c4c2c0"></div>
<div class="abs" style="left:2px;top:252px;width:22px;height:1px;background:#c4c2c0"></div>
<div class="abs" style="left:2px;top:276px;width:22px;height:1px;background:#c4c2c0"></div>
<div class="abs" style="left:1px;top:157px;width:24px;height:22px;background:#fff"></div>
<div class="abs" style="left:1px;top:179px;width:24px;height:2px;background:#111"></div>
<svg class="abs" style="left:4.5px;top:113px" width="17" height="17" viewBox="0 0 20 20"><defs><linearGradient id="stg" x1="0" y1="0" x2="0" y2="1"><stop offset="0" stop-color="#ffd040"/><stop offset="1" stop-color="#f07808"/></linearGradient></defs><path d="M10 1 L12.6 7.2 L19.2 7.8 L14.2 12.2 L15.8 18.8 L10 15.2 L4.2 18.8 L5.8 12.2 L.8 7.8 L7.4 7.2Z" fill="url(#stg)" stroke="#e07000" stroke-width=".9"/></svg>
<svg class="abs" style="left:5px;top:136.5px" width="17" height="17" viewBox="0 0 20 20"><circle cx="10" cy="10" r="9" fill="#cfe4ff" stroke="#3a8af0" stroke-width="1.6"/><circle cx="10" cy="10" r="6.2" fill="#ffe890" stroke="#fff" stroke-width="1"/><path d="M10 5.6 L10 10.4 L6.6 11.6" fill="none" stroke="#2a50d8" stroke-width="1.5"/></svg>
<svg class="abs" style="left:2.5px;top:158.3px" width="17" height="17" viewBox="0 0 17 17"><rect x="2.6" y="7.5" width="11.6" height="8" fill="#fff" stroke="#3a3ac8" stroke-width="1"/><rect x="6" y="8.6" width="4.4" height="6.4" fill="#f09000" stroke="#c87000" stroke-width=".5"/><path d="M.8 8.8 L8.4 1.2 L16 8.8" fill="none" stroke="#e81818" stroke-width="2"/><path d="M.8 9.8 L8.4 2.6 L16 9.8" fill="none" stroke="#fff" stroke-width=".7"/><rect x="12.4" y="2" width="1.6" height="3.6" fill="#e81818"/></svg>
<svg class="abs" style="left:4px;top:183.5px" width="18" height="18" viewBox="0 0 22 22"><rect x="9" y="2.4" width="10" height="12" rx="1.5" fill="#1a98e0" stroke="#0a60a8" stroke-width=".8"/><rect x="11.6" y="4.6" width="5" height="5" fill="#bfe4ff" stroke="#0a3a70" stroke-width=".8"/><path d="M5 3.6 Q1.6 8 5 12.4 M7.6 5 Q5.4 8 7.6 11" fill="none" stroke="#000" stroke-width="1.4"/><path d="M3 15.6 L8.6 13.4 L12 15.2 L16.6 13 L20 15.6 L14 20.4 L9.6 17 L3.4 18Z" fill="#fff" stroke="#000" stroke-width="1"/></svg>
<svg class="abs" style="left:4px;top:206px" width="20" height="20" viewBox="0 0 20 20"><defs><radialGradient id="glb" cx="38%" cy="32%" r="70%"><stop offset="0" stop-color="#8ad0ff"/><stop offset=".6" stop-color="#1a78e0"/><stop offset="1" stop-color="#0a3a98"/></radialGradient></defs><circle cx="10" cy="10" r="8.6" fill="url(#glb)"/><path d="M4 6 Q7 3 10 5 Q12 8 9 9.6 Q7.4 12 8.6 15 Q6 13 5 10 Q3 8.6 4 6Z M12 4 Q15.6 5 16.6 9 Q15 12 13.4 10 Q12.6 7 12 4Z M12 13 Q14 12.4 14.6 14.6 Q13 16.6 11.6 15.4Z" fill="#1a8a28"/></svg>
<svg class="abs" style="left:4.5px;top:232.5px" width="17" height="15.3" viewBox="0 0 20 18"><defs><linearGradient id="rf" x1="0" y1="0" x2="0" y2="1"><stop offset="0" stop-color="#e8283a"/><stop offset=".45" stop-color="#f4a0a8"/><stop offset="1" stop-color="#fff"/></linearGradient></defs><path d="M1.6 3.6 Q1.6 2 3 2 L7 2 Q8.4 2 8.4 3.4 L17 3.4 Q18.6 3.4 18.6 5 L18.6 14.6 Q18.6 16.2 17 16.2 L3 16.2 Q1.6 16.2 1.6 14.6Z" fill="url(#rf)" stroke="#d81020" stroke-width="1.4"/><rect x="2.4" y="6" width="15.6" height="1.4" fill="#d81020"/><rect x="2.6" y="3.2" width="5" height="2" fill="#ffd8dc"/></svg>
<svg class="abs" style="left:3px;top:254px" width="22" height="22" viewBox="0 0 22 22"><g transform="translate(11 11) rotate(-25) scale(1 .82)"><path d="M-2 -10 L2 -10 L2.8 -7 L5.6 -8.4 L8.4 -5.6 L7 -2.8 L10 -2 L10 2 L7 2.8 L8.4 5.6 L5.6 8.4 L2.8 7 L2 10 L-2 10 L-2.8 7 L-5.6 8.4 L-8.4 5.6 L-7 2.8 L-10 2 L-10 -2 L-7 -2.8 L-8.4 -5.6 L-5.6 -8.4 L-2.8 -7Z" fill="#8a8ac8" stroke="#5a5aa0" stroke-width=".8"/><circle r="3.6" fill="#eae8e6" stroke="#5a5aa0" stroke-width=".8"/><path d="M-8 -4 Q-4 -8 2 -8" fill="none" stroke="#c8c8f0" stroke-width="1.6"/></g></svg>
<div class="lv" style="left:25px;top:81px;width:155px;height:527px;border-left:1px solid #262626;border-top:1px solid #262626;box-shadow:inset 1px 1px 0 #6e6e6e;box-sizing:border-box"></div>
<svg class="abs" style="left:26.5px;top:83px" width="17" height="17" viewBox="0 0 17 17"><rect x="2.6" y="7.5" width="11.6" height="8" fill="#fff" stroke="#3a3ac8" stroke-width="1"/><rect x="6" y="8.6" width="4.4" height="6.4" fill="#f09000" stroke="#c87000" stroke-width=".5"/><path d="M.8 8.8 L8.4 1.2 L16 8.8" fill="none" stroke="#e81818" stroke-width="2"/><path d="M.8 9.8 L8.4 2.6 L16 9.8" fill="none" stroke="#fff" stroke-width=".7"/><rect x="12.4" y="2" width="1.6" height="3.6" fill="#e81818"/></svg>
<div class="row" style="left:44px;top:84px">Home Directory</div>
<svg class="abs" style="left:42px;top:102px" width="16" height="16"><use href="#folder"/></svg>
<div class="row" style="left:59px;top:102.0px;width:120px;overflow:hidden">chkrootkit</div>
<div class="abs" style="left:35px;top:109px;width:6px;height:1px;background:repeating-linear-gradient(to right,#000 0,#000 1px,transparent 1px,transparent 2px)"></div>
<svg class="abs" style="left:42px;top:120px" width="19" height="18" viewBox="0 0 18 17"><path d="M.6 11.6 L7.4 6.4 L17.2 10.4 L9.6 16.4Z" fill="#4a90ea" stroke="#2a70dc" stroke-width=".8" stroke-dasharray="1.8 .8"/><path d="M3.4 11.8 L7.6 8.6 L10 9.6 L6 13Z" fill="#3a80e0"/><path d="M6 13 L10 9.6 L14 11 L9.6 14.6Z" fill="#c4e2ff"/><path d="M9 9.4 L14 8 L16.4 6.2 L17.8 7.2 L15.6 9.2 L10 11Z" fill="#b4b8c4" opacity=".85"/><path d="M10.6 .4 L13.8 1.6 L9 11 L6.6 12.8 L6.4 9.8Z" fill="#f8a818" stroke="#e08000" stroke-width=".4"/><path d="M10.6 .4 L12 1 L7.4 10.4 L6.4 9.8Z" fill="#ffe060"/><path d="M6.4 9.8 L9 11 L6.6 12.8Z" fill="#8a5a30"/></svg>
<div class="row" style="left:61px;top:121.0px;width:118px;overflow:hidden">Desktop</div>
<div class="abs" style="left:35px;top:128px;width:6px;height:1px;background:repeating-linear-gradient(to right,#000 0,#000 1px,transparent 1px,transparent 2px)"></div>
<div class="abs" style="left:29px;top:124px;width:9px;height:9px;box-sizing:border-box;border:1px solid #bcbcbc;background:#fff"><div class="abs" style="left:1px;top:3px;width:5px;height:1px;background:#000"></div><div class="abs" style="left:3px;top:1px;width:1px;height:5px;background:#000"></div></div>
<svg class="abs" style="left:42px;top:140px" width="16" height="16"><use href="#folder"/></svg>
<div class="row" style="left:59px;top:140.0px;width:120px;overflow:hidden">docs</div>
<div class="abs" style="left:35px;top:147px;width:6px;height:1px;background:repeating-linear-gradient(to right,#000 0,#000 1px,transparent 1px,transparent 2px)"></div>
<div class="abs" style="left:29px;top:143px;width:9px;height:9px;box-sizing:border-box;border:1px solid #bcbcbc;background:#fff"><div class="abs" style="left:1px;top:3px;width:5px;height:1px;background:#000"></div><div class="abs" style="left:3px;top:1px;width:1px;height:5px;background:#000"></div></div>
<svg class="abs" style="left:42px;top:158px" width="16" height="16"><use href="#folder"/></svg>
<div class="row" style="left:59px;top:158.0px;width:120px;overflow:hidden">downloads</div>
<div class="abs" style="left:35px;top:165px;width:6px;height:1px;background:repeating-linear-gradient(to right,#000 0,#000 1px,transparent 1px,transparent 2px)"></div>
<div class="abs" style="left:29px;top:161px;width:9px;height:9px;box-sizing:border-box;border:1px solid #bcbcbc;background:#fff"><div class="abs" style="left:1px;top:3px;width:5px;height:1px;background:#000"></div><div class="abs" style="left:3px;top:1px;width:1px;height:5px;background:#000"></div></div>
<svg class="abs" style="left:42px;top:176px" width="16" height="16"><use href="#folder"/></svg>
<div class="row" style="left:59px;top:176.0px;width:120px;overflow:hidden">evolution</div>
<div class="abs" style="left:35px;top:183px;width:6px;height:1px;background:repeating-linear-gradient(to right,#000 0,#000 1px,transparent 1px,transparent 2px)"></div>
<div class="abs" style="left:29px;top:179px;width:9px;height:9px;box-sizing:border-box;border:1px solid #bcbcbc;background:#fff"><div class="abs" style="left:1px;top:3px;width:5px;height:1px;background:#000"></div><div class="abs" style="left:3px;top:1px;width:1px;height:5px;background:#000"></div></div>
<svg class="abs" style="left:42px;top:194px" width="16" height="16"><use href="#folder"/></svg>
<div class="row" style="left:59px;top:194.0px;width:120px;overflow:hidden">GNUstep</div>
<div class="abs" style="left:35px;top:201px;width:6px;height:1px;background:repeating-linear-gradient(to right,#000 0,#000 1px,transparent 1px,transparent 2px)"></div>
<div class="abs" style="left:29px;top:197px;width:9px;height:9px;box-sizing:border-box;border:1px solid #bcbcbc;background:#fff"><div class="abs" style="left:1px;top:3px;width:5px;height:1px;background:#000"></div><div class="abs" style="left:3px;top:1px;width:1px;height:5px;background:#000"></div></div>
<svg class="abs" style="left:42px;top:212px" width="16" height="16"><use href="#folder"/></svg>
<div class="row" style="left:59px;top:212.0px;width:120px;overflow:hidden">Mail</div>
<div class="abs" style="left:35px;top:219px;width:6px;height:1px;background:repeating-linear-gradient(to right,#000 0,#000 1px,transparent 1px,transparent 2px)"></div>
<div class="abs" style="left:29px;top:215px;width:9px;height:9px;box-sizing:border-box;border:1px solid #bcbcbc;background:#fff"><div class="abs" style="left:1px;top:3px;width:5px;height:1px;background:#000"></div><div class="abs" style="left:3px;top:1px;width:1px;height:5px;background:#000"></div></div>
<svg class="abs" style="left:42px;top:230px" width="16" height="16"><use href="#folder"/></svg>
<div class="row" style="left:59px;top:230.0px;width:120px;overflow:hidden">OpenOffice.org1.0.1</div>
<div class="abs" style="left:35px;top:237px;width:6px;height:1px;background:repeating-linear-gradient(to right,#000 0,#000 1px,transparent 1px,transparent 2px)"></div>
<div class="abs" style="left:29px;top:233px;width:9px;height:9px;box-sizing:border-box;border:1px solid #bcbcbc;background:#fff"><div class="abs" style="left:1px;top:3px;width:5px;height:1px;background:#000"></div><div class="abs" style="left:3px;top:1px;width:1px;height:5px;background:#000"></div></div>
<svg class="abs" style="left:42px;top:248px" width="16" height="16"><use href="#folder"/></svg>
<div class="row" style="left:59px;top:248.0px;width:120px;overflow:hidden"><span style="letter-spacing:0.22px">p<span class="hn">-</span>two.net</span></div>
<div class="abs" style="left:35px;top:255px;width:6px;height:1px;background:repeating-linear-gradient(to right,#000 0,#000 1px,transparent 1px,transparent 2px)"></div>
<div class="abs" style="left:29px;top:251px;width:9px;height:9px;box-sizing:border-box;border:1px solid #bcbcbc;background:#fff"><div class="abs" style="left:1px;top:3px;width:5px;height:1px;background:#000"></div><div class="abs" style="left:3px;top:1px;width:1px;height:5px;background:#000"></div></div>
<svg class="abs" style="left:42px;top:266px" width="16" height="16"><use href="#folder"/></svg>
<div class="row" style="left:59px;top:266.0px;width:120px;overflow:hidden">tmp</div>
<div class="abs" style="left:35px;top:273px;width:6px;height:1px;background:repeating-linear-gradient(to right,#000 0,#000 1px,transparent 1px,transparent 2px)"></div>
<div class="abs" style="left:29px;top:269px;width:9px;height:9px;box-sizing:border-box;border:1px solid #bcbcbc;background:#fff"><div class="abs" style="left:1px;top:3px;width:5px;height:1px;background:#000"></div><div class="abs" style="left:3px;top:1px;width:1px;height:5px;background:#000"></div></div>
<svg class="abs" style="left:42px;top:284px" width="16" height="16"><use href="#folder"/></svg>
<div class="row" style="left:59px;top:284.0px;width:120px;overflow:hidden">wallpaper</div>
<div class="abs" style="left:35px;top:291px;width:6px;height:1px;background:repeating-linear-gradient(to right,#000 0,#000 1px,transparent 1px,transparent 2px)"></div>
<div class="abs" style="left:29px;top:287px;width:9px;height:9px;box-sizing:border-box;border:1px solid #bcbcbc;background:#fff"><div class="abs" style="left:1px;top:3px;width:5px;height:1px;background:#000"></div><div class="abs" style="left:3px;top:1px;width:1px;height:5px;background:#000"></div></div>
<svg class="abs" style="left:42px;top:302px" width="16" height="16"><use href="#folder"/></svg>
<div class="row" style="left:59px;top:302.0px;width:120px;overflow:hidden"><span style="letter-spacing:0.27px">web<span class="hn">-</span>stuff</span></div>
<div class="abs" style="left:35px;top:309px;width:6px;height:1px;background:repeating-linear-gradient(to right,#000 0,#000 1px,transparent 1px,transparent 2px)"></div>
<div class="abs" style="left:29px;top:305px;width:9px;height:9px;box-sizing:border-box;border:1px solid #bcbcbc;background:#fff"><div class="abs" style="left:1px;top:3px;width:5px;height:1px;background:#000"></div><div class="abs" style="left:3px;top:1px;width:1px;height:5px;background:#000"></div></div>
<div class="abs" style="left:33px;top:100px;width:1px;height:210px;background:repeating-linear-gradient(to bottom,#000 0,#000 1px,transparent 1px,transparent 2px);z-index:0"></div>
<div class="abs" style="left:27px;top:591px;width:152px;height:16px;background:linear-gradient(to bottom,#dfe3ea 0,#fff 35%,#fff 100%);box-shadow:inset 0 0 0 1px #a0a8b4"></div>
<div class="abs" style="left:27px;top:591px;width:16px;height:16px;box-sizing:border-box;border:1px solid #98a0ac;background:linear-gradient(to bottom,#fff,#eef0f4 50%,#dfe3ea)"></div>
<svg class="abs" style="left:31px;top:594.5px" width="9" height="9" viewBox="0 0 9 9"><path d="M0 4.5 L5.2 -.2 L5.2 2.7 L9 2.7 L9 6.3 L5.2 6.3 L5.2 9.2Z" fill="#000"/></svg>
<div class="abs" style="left:43px;top:591px;width:97px;height:16px;box-sizing:border-box;border:1px solid #6a86ac;border-top-color:#5a7494;border-bottom-color:#5a6e8c;background:linear-gradient(to bottom,#b4d2f6 0,#c6e0fc 35%,#b0d0f4 60%,#8cb2e0 100%)"></div>
<div class="abs" style="left:85.0px;top:592px;width:1px;height:14px;background:#e6f2ff"></div><div class="abs" style="left:86.0px;top:592px;width:1px;height:14px;background:#46648a"></div><div class="abs" style="left:87.0px;top:592px;width:1px;height:14px;background:#e6f2ff"></div><div class="abs" style="left:88.0px;top:592px;width:1px;height:14px;background:#46648a"></div><div class="abs" style="left:89.0px;top:592px;width:1px;height:14px;background:#e6f2ff"></div><div class="abs" style="left:90.0px;top:592px;width:1px;height:14px;background:#46648a"></div><div class="abs" style="left:91.0px;top:592px;width:1px;height:14px;background:#e6f2ff"></div><div class="abs" style="left:92.0px;top:592px;width:1px;height:14px;background:#46648a"></div><div class="abs" style="left:93.0px;top:592px;width:1px;height:14px;background:#e6f2ff"></div><div class="abs" style="left:94.0px;top:592px;width:1px;height:14px;background:#46648a"></div><div class="abs" style="left:95.0px;top:592px;width:1px;height:14px;background:#e6f2ff"></div><div class="abs" style="left:96.0px;top:592px;width:1px;height:14px;background:#46648a"></div><div class="abs" style="left:97.0px;top:592px;width:1px;height:14px;background:#e6f2ff"></div><div class="abs" style="left:98.0px;top:592px;width:1px;height:14px;background:#46648a"></div><div class="abs" style="left:99.0px;top:592px;width:1px;height:14px;background:#e6f2ff"></div><div class="abs" style="left:100.0px;top:592px;width:1px;height:14px;background:#46648a"></div>
<div class="abs" style="left:147px;top:591px;width:32px;height:16px;box-sizing:border-box;border:1px solid #98a0ac;background:linear-gradient(to bottom,#fff,#eef0f4 50%,#dfe3ea)"></div>
<svg class="abs" style="left:150px;top:594.5px" width="9" height="9" viewBox="0 0 9 9"><path d="M0 4.5 L5.2 -.2 L5.2 2.7 L9 2.7 L9 6.3 L5.2 6.3 L5.2 9.2Z" fill="#000"/></svg>
<svg class="abs" style="left:167px;top:594.5px" width="9" height="9" viewBox="0 0 9 9"><path d="M9 4.5 L3.8 -.2 L3.8 2.7 L0 2.7 L0 6.3 L3.8 6.3 L3.8 9.2Z" fill="#000"/></svg>
<div class="abs" style="left:162.5px;top:595px;width:1px;height:8px;background:#000"></div>
<div class="abs" style="left:180px;top:81px;width:5px;height:544px;border-radius:0 0 3px 3px;background:linear-gradient(to right,#8a8a8a 0,#d8d8d8 30%,#fff 60%,#c8c8c8 100%);box-shadow:0 1px 0 #666"></div>
<div class="lv" style="left:185px;top:81px;width:725px;height:546px;border-left:1px solid #262626;border-top:1px solid #262626;box-shadow:inset 1px 1px 0 #6e6e6e;box-sizing:border-box"></div>
<div class="hd" style="left:187px;top:83px;width:152px">Name</div><div class="hd" style="left:339px;top:83px;width:67px">Size</div><div class="hd" style="left:406px;top:83px;width:132px;word-spacing:3.5px">File Type</div><div class="hd" style="left:538px;top:83px;width:134px">Modified</div><div class="hd" style="left:672px;top:83px;width:115px">Permissions</div><div class="hd" style="left:787px;top:83px;width:82px">Owner</div><div class="hd" style="left:869px;top:83px;width:41px">Group</div>
<div class="abs" style="left:187px;top:104px;width:723px;height:1px;background:#a8acb4"></div>
<svg class="abs" style="left:239.5px;top:91.69999999999999px" width="9" height="6" viewBox="0 0 9 6"><path d="M0 .5 L9 .5 L4.5 5.5Z" fill="#000"/></svg>
<svg class="abs" style="left:188px;top:106px" width="16" height="16"><use href="#folder"/></svg><div class="row" style="left:205.5px;top:107.0px">chkrootkit</div><div class="row" style="left:339px;top:107.0px;width:60.5px;text-align:right">624 B</div><div class="row" style="left:406.8px;top:107.0px">Directory</div><div class="row" style="left:539.7px;top:107.0px">19/09/02 2:17 pm</div><div class="row" style="left:672.8px;top:107.0px">rwxr<span class="hy">-</span>xr<span class="hy">-</span>x</div><div class="row" style="left:788.4px;top:107.0px">bern</div><div class="row" style="left:870px;top:107.0px">users</div>
<svg class="abs" style="left:187px;top:124px" width="19" height="18" viewBox="0 0 18 17"><path d="M.6 11.6 L7.4 6.4 L17.2 10.4 L9.6 16.4Z" fill="#4a90ea" stroke="#2a70dc" stroke-width=".8" stroke-dasharray="1.8 .8"/><path d="M3.4 11.8 L7.6 8.6 L10 9.6 L6 13Z" fill="#3a80e0"/><path d="M6 13 L10 9.6 L14 11 L9.6 14.6Z" fill="#c4e2ff"/><path d="M9 9.4 L14 8 L16.4 6.2 L17.8 7.2 L15.6 9.2 L10 11Z" fill="#b4b8c4" opacity=".85"/><path d="M10.6 .4 L13.8 1.6 L9 11 L6.6 12.8 L6.4 9.8Z" fill="#f8a818" stroke="#e08000" stroke-width=".4"/><path d="M10.6 .4 L12 1 L7.4 10.4 L6.4 9.8Z" fill="#ffe060"/><path d="M6.4 9.8 L9 11 L6.6 12.8Z" fill="#8a5a30"/></svg>
<div class="row" style="left:207px;top:126.0px">Desktop</div><div class="row" style="left:339px;top:126.0px;width:60.5px;text-align:right">696 B</div><div class="row" style="left:406.8px;top:126.0px">Directory</div><div class="row" style="left:539.7px;top:126.0px">05/10/02 1:02 pm</div><div class="row" style="left:672.8px;top:126.0px">rwx<span class="hy">-</span><span class="hy">-</span><span class="hy">-</span><span class="hy">-</span><span class="hy">-</span><span class="hy">-</span></div><div class="row" style="left:788.4px;top:126.0px">bern</div><div class="row" style="left:870px;top:126.0px">users</div>
<svg class="abs" style="left:188px;top:144px" width="16" height="16"><use href="#folder"/></svg><div class="row" style="left:205.5px;top:145.0px">docs</div><div class="row" style="left:339px;top:145.0px;width:60.5px;text-align:right">1.9 KB</div><div class="row" style="left:406.8px;top:145.0px">Directory</div><div class="row" style="left:539.7px;top:145.0px">04/10/02 10:23 pm</div><div class="row" style="left:672.8px;top:145.0px">rwxr<span class="hy">-</span>xr<span class="hy">-</span>x</div><div class="row" style="left:788.4px;top:145.0px">bern</div><div class="row" style="left:870px;top:145.0px">users</div>
<svg class="abs" style="left:188px;top:162px" width="16" height="16"><use href="#folder"/></svg><div class="row" style="left:205.5px;top:163.0px">downloads</div><div class="row" style="left:339px;top:163.0px;width:60.5px;text-align:right">672 B</div><div class="row" style="left:406.8px;top:163.0px">Directory</div><div class="row" style="left:539.7px;top:163.0px">04/10/02 9:48 pm</div><div class="row" style="left:672.8px;top:163.0px">rwxr<span class="hy">-</span>xr<span class="hy">-</span>x</div><div class="row" style="left:788.4px;top:163.0px">bern</div><div class="row" style="left:870px;top:163.0px">users</div>
<svg class="abs" style="left:188px;top:180px" width="16" height="16"><use href="#folder"/></svg><div class="row" style="left:205.5px;top:181.0px">evolution</div><div class="row" style="left:339px;top:181.0px;width:60.5px;text-align:right">360 B</div><div class="row" style="left:406.8px;top:181.0px">Directory</div><div class="row" style="left:539.7px;top:181.0px">05/10/02 2:14 pm</div><div class="row" style="left:672.8px;top:181.0px">rwx<span class="hy">-</span><span class="hy">-</span><span class="hy">-</span><span class="hy">-</span><span class="hy">-</span><span class="hy">-</span></div><div class="row" style="left:788.4px;top:181.0px">bern</div><div class="row" style="left:870px;top:181.0px">users</div>
<svg class="abs" style="left:188px;top:198px" width="16" height="16"><use href="#folder"/></svg><div class="row" style="left:205.5px;top:199.0px">GNUstep</div><div class="row" style="left:339px;top:199.0px;width:60.5px;text-align:right">120 B</div><div class="row" style="left:406.8px;top:199.0px">Directory</div><div class="row" style="left:539.7px;top:199.0px">21/08/02 1:27 pm</div><div class="row" style="left:672.8px;top:199.0px">rwxr<span class="hy">-</span>xr<span class="hy">-</span>x</div><div class="row" style="left:788.4px;top:199.0px">bern</div><div class="row" style="left:870px;top:199.0px">users</div>
<svg class="abs" style="left:188px;top:216px" width="16" height="16"><use href="#folder"/></svg><div class="row" style="left:205.5px;top:217.0px">Mail</div><div class="row" style="left:339px;top:217.0px;width:60.5px;text-align:right">2.2 KB</div><div class="row" style="left:406.8px;top:217.0px">Directory</div><div class="row" style="left:539.7px;top:217.0px">05/10/02 2:17 pm</div><div class="row" style="left:672.8px;top:217.0px">rwxr<span class="hy">-</span>xr<span class="hy">-</span>x</div><div class="row" style="left:788.4px;top:217.0px">bern</div><div class="row" style="left:870px;top:217.0px">users</div>
<svg class="abs" style="left:188px;top:234px" width="16" height="16"><use href="#folder"/></svg><div class="row" style="left:205.5px;top:235.0px">OpenOffice.org1.0.1</div><div class="row" style="left:339px;top:235.0px;width:60.5px;text-align:right">320 B</div><div class="row" style="left:406.8px;top:235.0px">Directory</div><div class="row" style="left:539.7px;top:235.0px">13/09/02 11:06 am</div><div class="row" style="left:672.8px;top:235.0px">rwxr<span class="hy">-</span>xr<span class="hy">-</span>x</div><div class="row" style="left:788.4px;top:235.0px">bern</div><div class="row" style="left:870px;top:235.0px">users</div>
<svg class="abs" style="left:188px;top:252px" width="16" height="16"><use href="#folder"/></svg><div class="row" style="left:205.5px;top:253.0px"><span style="letter-spacing:0.22px">p<span class="hn">-</span>two.net</span></div><div class="row" style="left:339px;top:253.0px;width:60.5px;text-align:right">1.0 KB</div><div class="row" style="left:406.8px;top:253.0px">Directory</div><div class="row" style="left:539.7px;top:253.0px">04/10/02 3:39 am</div><div class="row" style="left:672.8px;top:253.0px">rwxr<span class="hy">-</span>xr<span class="hy">-</span>x</div><div class="row" style="left:788.4px;top:253.0px">bern</div><div class="row" style="left:870px;top:253.0px">users</div>
<svg class="abs" style="left:188px;top:270px" width="16" height="16"><use href="#folder"/></svg><div class="row" style="left:205.5px;top:271.0px">tmp</div><div class="row" style="left:339px;top:271.0px;width:60.5px;text-align:right">256 B</div><div class="row" style="left:406.8px;top:271.0px">Directory</div><div class="row" style="left:539.7px;top:271.0px">03/10/02 10:54 pm</div><div class="row" style="left:672.8px;top:271.0px">rwxr<span class="hy">-</span>xr<span class="hy">-</span>x</div><div class="row" style="left:788.4px;top:271.0px">bern</div><div class="row" style="left:870px;top:271.0px">users</div>
<svg class="abs" style="left:188px;top:288px" width="16" height="16"><use href="#folder"/></svg><div class="row" style="left:205.5px;top:289.0px">wallpaper</div><div class="row" style="left:339px;top:289.0px;width:60.5px;text-align:right">296 B</div><div class="row" style="left:406.8px;top:289.0px">Directory</div><div class="row" style="left:539.7px;top:289.0px">05/10/02 2:54 am</div><div class="row" style="left:672.8px;top:289.0px">rwxr<span class="hy">-</span>xr<span class="hy">-</span>x</div><div class="row" style="left:788.4px;top:289.0px">bern</div><div class="row" style="left:870px;top:289.0px">users</div>
<svg class="abs" style="left:188px;top:306px" width="16" height="16"><use href="#folder"/></svg><div class="row" style="left:205.5px;top:307.0px"><span style="letter-spacing:0.27px">web<span class="hn">-</span>stuff</span></div><div class="row" style="left:339px;top:307.0px;width:60.5px;text-align:right">272 B</div><div class="row" style="left:406.8px;top:307.0px">Directory</div><div class="row" style="left:539.7px;top:307.0px">30/09/02 1:56 pm</div><div class="row" style="left:672.8px;top:307.0px">rwxr<span class="hy">-</span>xr<span class="hy">-</span>x</div><div class="row" style="left:788.4px;top:307.0px">bern</div><div class="row" style="left:870px;top:307.0px">users</div>
<svg class="abs" style="left:188px;top:324px" width="16" height="16"><use href="#file"/></svg><div class="row" style="left:205px;top:325.0px"><span style="letter-spacing:-0.16px">harbinger<span class="hn">-</span>divx.avi</span></div><div class="row" style="left:339px;top:325.0px;width:60.5px;text-align:right">855.5 KB</div><div class="row" style="left:406.8px;top:325.0px;word-spacing:2px">Microsoft AVI Video</div><div class="row" style="left:539.7px;top:325.0px">05/10/02 3:01 am</div><div class="row" style="left:672.8px;top:325.0px">rw<span class="hy">-</span>r<span class="hy">-</span><span class="hy">-</span>r<span class="hy">-</span><span class="hy">-</span></div><div class="row" style="left:788.4px;top:325.0px">bern</div><div class="row" style="left:870px;top:325.0px">users</div>
<svg class="abs" style="left:188px;top:342px" width="16" height="16"><use href="#file"/></svg><div class="row" style="left:205px;top:343.0px">pyre.mpg</div><div class="row" style="left:339px;top:343.0px;width:60.5px;text-align:right">897.2 KB</div><div class="row" style="left:406.8px;top:343.0px">MPEG Video</div><div class="row" style="left:539.7px;top:343.0px">05/10/02 3:00 am</div><div class="row" style="left:672.8px;top:343.0px">rw<span class="hy">-</span>r<span class="hy">-</span><span class="hy">-</span>r<span class="hy">-</span><span class="hy">-</span></div><div class="row" style="left:788.4px;top:343.0px">bern</div><div class="row" style="left:870px;top:343.0px">users</div>
<svg class="abs" style="left:188px;top:360px" width="16" height="16"><use href="#file"/></svg><div class="row" style="left:205px;top:361.0px">ripples3.mpg</div><div class="row" style="left:339px;top:361.0px;width:60.5px;text-align:right">1.2 MB</div><div class="row" style="left:406.8px;top:361.0px">MPEG Video</div><div class="row" style="left:539.7px;top:361.0px">05/10/02 3:01 am</div><div class="row" style="left:672.8px;top:361.0px">rw<span class="hy">-</span>r<span class="hy">-</span><span class="hy">-</span>r<span class="hy">-</span><span class="hy">-</span></div><div class="row" style="left:788.4px;top:361.0px">bern</div><div class="row" style="left:870px;top:361.0px">users</div>
<svg class="abs" style="left:188px;top:378px" width="16" height="16"><use href="#file"/></svg><div class="row" style="left:205px;top:379.0px"><span style="letter-spacing:-0.125px">singularity<span class="hn">-</span>divx.avi</span></div><div class="row" style="left:339px;top:379.0px;width:60.5px;text-align:right">1.3 MB</div><div class="row" style="left:406.8px;top:379.0px;word-spacing:2px">Microsoft AVI Video</div><div class="row" style="left:539.7px;top:379.0px">05/10/02 3:02 am</div><div class="row" style="left:672.8px;top:379.0px">rw<span class="hy">-</span>r<span class="hy">-</span><span class="hy">-</span>r<span class="hy">-</span><span class="hy">-</span></div><div class="row" style="left:788.4px;top:379.0px">bern</div><div class="row" style="left:870px;top:379.0px">users</div>
<svg class="abs" style="left:188px;top:396px" width="16" height="16"><use href="#file"/></svg><div class="row" style="left:205px;top:397.0px">whitemagic.avi</div><div class="row" style="left:339px;top:397.0px;width:60.5px;text-align:right">597.5 KB</div><div class="row" style="left:406.8px;top:397.0px;word-spacing:2px">Microsoft AVI Video</div><div class="row" style="left:539.7px;top:397.0px">05/10/02 3:01 am</div><div class="row" style="left:672.8px;top:397.0px">rw<span class="hy">-</span>r<span class="hy">-</span><span class="hy">-</span>r<span class="hy">-</span><span class="hy">-</span></div><div class="row" style="left:788.4px;top:397.0px">bern</div><div class="row" style="left:870px;top:397.0px">users</div>
<svg class="abs" style="left:188px;top:414px" width="16" height="16"><use href="#file"/></svg><div class="row" style="left:205px;top:415.0px">xplode.mpg</div><div class="row" style="left:339px;top:415.0px;width:60.5px;text-align:right">372.5 KB</div><div class="row" style="left:406.8px;top:415.0px">MPEG Video</div><div class="row" style="left:539.7px;top:415.0px">05/10/02 3:01 am</div><div class="row" style="left:672.8px;top:415.0px">rw<span class="hy">-</span>r<span class="hy">-</span><span class="hy">-</span>r<span class="hy">-</span><span class="hy">-</span></div><div class="row" style="left:788.4px;top:415.0px">bern</div><div class="row" style="left:870px;top:415.0px">users</div>
<div class="abs" style="left:187px;top:105px;width:152px;height:18px;box-sizing:border-box;border:1px dotted #000"></div>
<div class="abs" style="left:187px;top:591px;width:722px;height:16px;background:linear-gradient(to bottom,#dfe3ea 0,#fff 35%,#fff 100%);box-shadow:inset 0 0 0 1px #a0a8b4"></div>
<div class="abs" style="left:187px;top:591px;width:16px;height:16px;box-sizing:border-box;border:1px solid #98a0ac;background:linear-gradient(to bottom,#fff,#eef0f4 50%,#dfe3ea)"></div>
<svg class="abs" style="left:191px;top:594.5px" width="9" height="9" viewBox="0 0 9 9"><path d="M0 4.5 L5.2 -.2 L5.2 2.7 L9 2.7 L9 6.3 L5.2 6.3 L5.2 9.2Z" fill="#000"/></svg>
<div class="abs" style="left:205px;top:591px;width:588px;height:16px;box-sizing:border-box;border:1px solid #6a86ac;border-top-color:#5a7494;border-bottom-color:#5a6e8c;background:linear-gradient(to bottom,#b4d2f6 0,#c6e0fc 35%,#b0d0f4 60%,#8cb2e0 100%)"></div>
<div class="abs" style="left:491.0px;top:592px;width:1px;height:14px;background:#e6f2ff"></div><div class="abs" style="left:492.0px;top:592px;width:1px;height:14px;background:#46648a"></div><div class="abs" style="left:493.0px;top:592px;width:1px;height:14px;background:#e6f2ff"></div><div class="abs" style="left:494.0px;top:592px;width:1px;height:14px;background:#46648a"></div><div class="abs" style="left:495.0px;top:592px;width:1px;height:14px;background:#e6f2ff"></div><div class="abs" style="left:496.0px;top:592px;width:1px;height:14px;background:#46648a"></div><div class="abs" style="left:497.0px;top:592px;width:1px;height:14px;background:#e6f2ff"></div><div class="abs" style="left:498.0px;top:592px;width:1px;height:14px;background:#46648a"></div><div class="abs" style="left:499.0px;top:592px;width:1px;height:14px;background:#e6f2ff"></div><div class="abs" style="left:500.0px;top:592px;width:1px;height:14px;background:#46648a"></div><div class="abs" style="left:501.0px;top:592px;width:1px;height:14px;background:#e6f2ff"></div><div class="abs" style="left:502.0px;top:592px;width:1px;height:14px;background:#46648a"></div><div class="abs" style="left:503.0px;top:592px;width:1px;height:14px;background:#e6f2ff"></div><div class="abs" style="left:504.0px;top:592px;width:1px;height:14px;background:#46648a"></div><div class="abs" style="left:505.0px;top:592px;width:1px;height:14px;background:#e6f2ff"></div><div class="abs" style="left:506.0px;top:592px;width:1px;height:14px;background:#46648a"></div>
<div class="abs" style="left:877px;top:591px;width:32px;height:16px;box-sizing:border-box;border:1px solid #98a0ac;background:linear-gradient(to bottom,#fff,#eef0f4 50%,#dfe3ea)"></div>
<svg class="abs" style="left:880px;top:594.5px" width="9" height="9" viewBox="0 0 9 9"><path d="M0 4.5 L5.2 -.2 L5.2 2.7 L9 2.7 L9 6.3 L5.2 6.3 L5.2 9.2Z" fill="#000"/></svg>
<svg class="abs" style="left:897px;top:594.5px" width="9" height="9" viewBox="0 0 9 9"><path d="M9 4.5 L3.8 -.2 L3.8 2.7 L0 2.7 L0 6.3 L3.8 6.3 L3.8 9.2Z" fill="#000"/></svg>
<div class="abs" style="left:892.5px;top:595px;width:1px;height:8px;background:#000"></div>
<div class="abs" style="left:186px;top:607px;width:724px;height:20px;background:#fff"></div>
<svg class="abs" style="left:190px;top:610px" width="12" height="12" viewBox="0 0 12 12"><defs><radialGradient id="led" cx="40%" cy="35%" r="65%"><stop offset="0" stop-color="#a0ff90"/><stop offset=".5" stop-color="#18d818"/><stop offset="1" stop-color="#0a9a0a"/></radialGradient></defs><circle cx="6" cy="6" r="5.4" fill="url(#led)" stroke="#7a8a7a" stroke-width="1"/></svg>
<div class="row" style="left:227.2px;top:609.3px;word-spacing:1px">whitemagic.avi (597.5 KB)  <span style="word-spacing:2.4px">Microsoft AVI Video</span></div>
<div class="abs" style="left:895px;top:610px;width:13px;height:13px;box-sizing:border-box;border:1px solid #888;border-right-color:#ddd;border-bottom-color:#ddd;background:#f4f4f4"></div>
<svg class="abs" style="left:896px;top:611px" width="11" height="11" viewBox="0 0 11 11"><path d="M2 5 L4.6 8.6 L9.6 1.6" fill="none" stroke="#444" stroke-width="1.6"/><path d="M5 4 L8 7" stroke="#999" stroke-width="1"/></svg>
<div class="lframe"></div><div class="rframe"></div><div class="bframe"></div>
</div></div>
<div class="abs" style="left:999px;top:118px;width:1px;height:625px;background:#2a5aa4"></div>
<div id="kick">
<svg class="abs" style="left:2.0px;top:3.0px" width="8" height="5" viewBox="0 0 8 5"><path d="M0 5 L4 0 L8 5Z" fill="#000"/></svg>
<svg class="abs" style="left:8.0px;top:3.0px" width="18" height="18" viewBox="0 0 18 18"><g transform="translate(8 9.5)"><path d="M0 -7.6 L1.8 -5 L4.6 -6.2 L4.4 -3.2 L7.4 -2.4 L5.4 0 L7.4 2.4 L4.4 3.2 L4.6 6.2 L1.8 5 L0 7.6 L-1.8 5 L-4.6 6.2 L-4.4 3.2 L-7.4 2.4 L-5.4 0 L-7.4 -2.4 L-4.4 -3.2 L-4.6 -6.2 L-1.8 -5Z" fill="#3a8af0"/><circle r="2.6" fill="#eae8e6"/></g><text x="11.5" y="14.5" text-anchor="middle" font-family="DejaVu Sans,sans-serif" font-weight="bold" font-size="15" fill="#1a68e0">K</text></svg>
<svg class="abs" style="left:32.0px;top:3.5px" width="8" height="4.5" viewBox="0 0 8 4.5"><path d="M0 4.5 L4 0 L8 4.5Z" fill="#000"/></svg>
<svg class="abs" style="left:33.0px;top:9.5px" width="6" height="11" viewBox="0 0 6 11"><rect x="0" y="0" width="1" height="11" fill="#b4b2b0"/><rect x="2" y="0" width="1" height="11" fill="#b4b2b0"/><rect x="4" y="0" width="1" height="11" fill="#b4b2b0"/><rect x="1" y="0" width="1" height="11" fill="#fff"/><rect x="3" y="0" width="1" height="11" fill="#fff"/></svg>
<svg class="abs" style="left:44.0px;top:4.5px" width="18" height="17" viewBox="0 0 18 17"><defs><radialGradient id="mpx" cx="50%" cy="35%" r="65%"><stop offset="0" stop-color="#a8c8ff"/><stop offset=".6" stop-color="#4a80f0"/><stop offset="1" stop-color="#2a50c8"/></radialGradient></defs><ellipse cx="9" cy="8.5" rx="8.6" ry="8" fill="url(#mpx)"/><path d="M5 2 L13 15 M13 2 L5 15" stroke="#e8f0ff" stroke-width="2.6" opacity=".85"/><rect x="2" y="6.4" width="14" height="4" fill="#fff" opacity=".75"/><path d="M3 7.4 V9.6 M4.4 7.4 V9.6 M6 7.4 V9.6 M7.4 8 V9.6 M9 7.4 V9.6 M10.6 7.4 V9.6 M12 8 V9.6 M13.6 7.4 V9.6 M15 8 V9.6" stroke="#18286a" stroke-width=".8"/></svg>
<svg class="abs" style="left:64.0px;top:4.0px" width="17" height="17" viewBox="0 0 17 17"><path d="M1 13 L10 2.6 L14 6.4 L4.4 16Z" fill="#f4f0e4" stroke="#8a8470" stroke-width=".6"/><path d="M2 14 L11.6 4 M3.4 15 L13 5" stroke="#b8a050" stroke-width="1"/><path d="M10 2.6 L14.4 .6 L16.4 2.6 L14 6.4Z" fill="#222"/><path d="M1 13 L.4 16.4 L4.4 16Z" fill="#c8a040"/></svg>
<svg class="abs" style="left:84.0px;top:5.0px" width="16" height="13.5" viewBox="0 0 16 13.5"><rect x=".6" y=".6" width="14.8" height="12.3" rx="1.4" fill="#d8e8ff" stroke="#3a7ae0" stroke-width="1.2"/><rect x="2.6" y="2.6" width="10.8" height="8.3" fill="url(#scr)"/><rect x="3.6" y="3.4" width="1.6" height="1.4" fill="#cfe4ff"/></svg>
<svg class="abs" style="left:103.5px;top:4.0px" width="17" height="17" viewBox="0 0 17 17"><path d="M1 3 L7 1.4 L7 14 L1 15.6Z" fill="#4aa04a" stroke="#2a782a" stroke-width=".6"/><path d="M7 1.6 L16 1 L12.4 10 L7 11Z" fill="#8ac0f0" stroke="#4a88d0" stroke-width=".6"/><path d="M9 3 L13.6 2.6 L11 8.6Z" fill="#e8f4ff"/><path d="M6 12 L13 11 L15 14 L7 16Z" fill="#a8c8e8" stroke="#6a90c0" stroke-width=".5"/></svg>
<svg class="abs" style="left:124.0px;top:4.0px" width="15" height="16" viewBox="0 0 15 16"><rect x=".5" y=".5" width="13.6" height="13.6" fill="#e8f0ff" stroke="#88a8e0" stroke-width=".8"/><path d="M11 1 L13.6 1 L6 14 L2 14Z" fill="#1a3ab8"/><path d="M2 14 L13.6 14 L13.6 10Z" fill="#b8c8f0"/><rect x="1" y="14.4" width="14" height="1.4" fill="#a0a0a8" opacity=".6"/></svg>
<svg class="abs" style="left:143.0px;top:3.5px" width="17" height="18" viewBox="0 0 17 18"><path d="M2 6 L12 1 L16.4 10 L6.4 15.6Z" fill="#f0ece0" stroke="#5a5648" stroke-width=".9"/><circle cx="9.6" cy="6.4" r="1.6" fill="none" stroke="#333" stroke-width=".8"/><path d="M8 11 L13 8.6" stroke="#333" stroke-width=".8"/><path d="M1 11.4 L5 9.6 L8 11.6 L8 15.6 L4 17.4 L1 15.4Z" fill="#3a4ae0" stroke="#1a2aa0" stroke-width=".5"/><path d="M1 11.4 L5 9.6 L8 11.6 L4 13.4Z" fill="#8a98ff"/></svg>
<svg class="abs" style="left:163.5px;top:4.0px" width="16" height="16" viewBox="0 0 16 16"><circle cx="8" cy="8" r="7.4" fill="url(#glb)"/><path d="M3 5 Q6 2 8.4 4 Q10 6.6 7.4 8 Q6 10 7 13 Q4.6 11 4 8.6 Q2.4 7 3 5Z M10 3 Q13 4 13.8 7.6 Q12.4 10 11 8.4 Q10.4 5.6 10 3Z M10 11 Q11.8 10.4 12.2 12.4 Q10.8 14 9.6 13Z" fill="#1a8a28"/></svg>
<svg class="abs" style="left:183.5px;top:4.0px" width="17" height="17" viewBox="0 0 17 17"><path d="M1 9 L6.4 1.6 L10 4 L5 12.6Z" fill="#f0f0ff" stroke="#6a6ae0" stroke-width=".8"/><path d="M2.6 8.6 L6 6.4 L6.6 9.6" fill="none" stroke="#8a8ae8" stroke-width=".6"/><path d="M8 2 L15 4.6 L15 7 L9.6 5.6Z M9 6.6 L16 9 L16 11.6 L10 9.6Z M8 11 L15 13.4 L15 16 L9 14Z" fill="#f8a020" stroke="#e07800" stroke-width=".5"/><path d="M8 2 L9.6 5.6 L9 6.6 L10 9.6 L8 11 L9 14" fill="none" stroke="#ffd080" stroke-width="1"/></svg>
<svg class="abs" style="left:204.5px;top:5.0px" width="15" height="15" viewBox="0 0 15 15"><path d="M1 3 L8 1 L14 3.6 L14 11.6 L7.6 14 L1 11Z" fill="#1a9a3a" stroke="#0a6a20" stroke-width=".8"/><path d="M1 3 L7.6 5.6 L14 3.6 M7.6 5.6 L7.6 14" fill="none" stroke="#0a6a20" stroke-width=".7"/><path d="M9 3 L13 4.6" stroke="#e82020" stroke-width="1.2"/></svg>
<svg class="abs" style="left:224.0px;top:4.0px" width="16.5" height="17" viewBox="0 0 16.5 17"><path d="M.8 7.6 L8.2 1 L15.8 7.6 L8.2 14.4Z" fill="#fff" stroke="#222" stroke-width="1"/><path d="M.8 7.6 L8.2 14.4 L15.8 7.6 L15.8 9.4 L8.2 16.4 L.8 9.4Z" fill="#b8b8b8" stroke="#444" stroke-width=".5"/><text x="8.4" y="10.4" text-anchor="middle" font-family="DejaVu Serif,serif" font-style="italic" font-weight="bold" font-size="8" fill="#000">f</text></svg>
<svg class="abs" style="left:245.0px;top:4.5px" width="12" height="15.5" viewBox="0 0 12 15.5"><rect x=".6" y=".6" width="10.8" height="14.3" rx="1.2" fill="#1a2a2a" stroke="#0a8a8a" stroke-width="1.1"/><rect x="2.4" y="2.2" width="7.2" height="2.6" fill="#1ac83a"/><rect x="2.4" y="6" width="7.2" height="1.4" fill="#c8c8c8"/><rect x="2.4" y="8.6" width="7.2" height="1.4" fill="#c8c8c8"/><rect x="2.4" y="11.2" width="7.2" height="1.4" fill="#c8c8c8"/><rect x="7.6" y="11.2" width="2" height="1.4" fill="#e83030"/></svg>
<svg class="abs" style="left:265.0px;top:3.5px" width="17" height="17" viewBox="0 0 17 17"><path d="M1 16 L1.6 13.6 L9 6.2 L10.8 8 L3.4 15.4Z" fill="#fff" stroke="#222" stroke-width="1"/><path d="M8.4 5 L12 8.6 L13 7.6 L12 6.6 L15.6 3 Q16.4 1.6 15.2 .8 Q14 .4 13.2 1.2 L10.4 4 L9.4 4Z" fill="#1a9a2a" stroke="#0a5a14" stroke-width=".7"/></svg>
<svg class="abs" style="left:284.0px;top:3.5px" width="8" height="4.5" viewBox="0 0 8 4.5"><path d="M0 4.5 L4 0 L8 4.5Z" fill="#000"/></svg>
<svg class="abs" style="left:285.0px;top:9.5px" width="6" height="11" viewBox="0 0 6 11"><rect x="0" y="0" width="1" height="11" fill="#b4b2b0"/><rect x="2" y="0" width="1" height="11" fill="#b4b2b0"/><rect x="4" y="0" width="1" height="11" fill="#b4b2b0"/><rect x="1" y="0" width="1" height="11" fill="#fff"/><rect x="3" y="0" width="1" height="11" fill="#fff"/></svg>
<div class="abs" style="left:292px;top:2px;width:156px;height:20px;background:#e8e8e8"></div>
<div class="pg" style="left:292px;width:26px;background:#fff;color:#000;box-shadow:inset -1px -1px 0 #333,inset 1px 1px 0 #333"><div class="abs" style="left:3px;top:6px;width:20px;height:12px;background:#a8ccf8"></div><span style="position:relative">1</span></div><div class="pg" style="left:319px;width:24.5px">2</div><div class="pg" style="left:345px;width:24.5px">3</div><div class="pg" style="left:371px;width:24.5px">4</div><div class="pg" style="left:397px;width:24.5px">5</div><div class="pg" style="left:423px;width:24.5px"><div class="abs" style="left:2px;top:6px;width:20px;height:12.5px;box-sizing:border-box;background:#dfeafa;border:1px solid #fff;border-top-width:2px"></div><span style="position:relative;color:#f4f8ff">6</span></div>
<svg class="abs" style="left:449.0px;top:3.5px" width="8" height="4.5" viewBox="0 0 8 4.5"><path d="M0 4.5 L4 0 L8 4.5Z" fill="#000"/></svg>
<svg class="abs" style="left:450.0px;top:9.5px" width="6" height="11" viewBox="0 0 6 11"><rect x="0" y="0" width="1" height="11" fill="#b4b2b0"/><rect x="2" y="0" width="1" height="11" fill="#b4b2b0"/><rect x="4" y="0" width="1" height="11" fill="#b4b2b0"/><rect x="1" y="0" width="1" height="11" fill="#fff"/><rect x="3" y="0" width="1" height="11" fill="#fff"/></svg>
<div class="abs" style="left:456.5px;top:3px;width:1px;height:19px;background:#8a8886"></div>
<svg class="abs" style="left:461.0px;top:2.5px" width="18" height="19.5" viewBox="0 0 18 19.5"><rect x="1" y="2.4" width="16" height="16.4" rx="2" fill="#f08818" stroke="#a85a08" stroke-width="1"/><rect x="3.4" y="3.6" width="11.2" height="14" fill="#fff" stroke="#444" stroke-width=".6"/><path d="M5 2.4 L6.4 .6 L11.6 .6 L13 2.4 L12 4.6 L6 4.6Z" fill="#c8c8c8" stroke="#555" stroke-width=".6"/><path d="M5.6 6.6 L12.4 6.6 M5.6 8.4 L12.4 8.4" stroke="#444" stroke-width=".8"/><text x="9" y="16.6" text-anchor="middle" font-family="DejaVu Sans,sans-serif" font-weight="bold" font-size="8.5" fill="#000">K</text></svg>
<svg class="abs" style="left:482.5px;top:3.5px" width="14.5" height="14.5" viewBox="0 0 14.5 14.5"><rect x=".5" y=".5" width="13.5" height="13.5" fill="#fff" stroke="#555" stroke-width="1"/><rect x="1" y="1" width="12.5" height="2.6" fill="#1a2ac8"/><path d="M1 6 H13.5 M1 8.6 H13.5 M1 11.2 H13.5 M4 3.6 V13.5 M7 3.6 V13.5 M10 3.6 V13.5" stroke="#a8a8a8" stroke-width=".6"/><path d="M8 13 L9.4 7 L11.4 13Z" fill="#f0a010"/><circle cx="9.6" cy="6.6" r="1.4" fill="#f0c020"/></svg>
<svg class="abs" style="left:506.0px;top:3.5px" width="17" height="16.5" viewBox="0 0 17 16.5"><ellipse cx="8.5" cy="15.2" rx="8" ry="1.2" fill="#c8c8c8" opacity=".7"/><path d="M8.5 .6 Q11.4 .6 11.4 4.4 Q14.4 8.6 13.6 13.4 L3.4 13.4 Q2.6 8.6 5.6 4.4 Q5.6 .6 8.5 .6Z" fill="#111"/><path d="M8.5 5.6 Q11.4 7.6 11.4 12.6 L5.6 12.6 Q5.6 7.6 8.5 5.6Z" fill="#fff"/><path d="M7 4 L10 4 L8.5 5.6Z" fill="#f0a010"/><path d="M2.6 14.6 L6.4 12.4 L6.4 14.8Z M14.4 14.6 L10.6 12.4 L10.6 14.8Z" fill="#f0a010"/></svg>
<svg class="abs" style="left:533.5px;top:4.0px" width="16" height="15" viewBox="0 0 16 15"><rect x="2.4" y=".6" width="11.4" height="9" fill="#d8d8d8" stroke="#444" stroke-width=".8"/><rect x="4.2" y="2.2" width="7.8" height="5.6" fill="#1a2ad8"/><path d="M.6 11 L13 11 L15.4 9.6 L15.4 12.6 L13 14.4 L.6 14.4Z" fill="#c8c8c8" stroke="#444" stroke-width=".8"/><path d="M2 12.6 H9" stroke="#555" stroke-width="1"/></svg>
<svg class="abs" style="left:554.5px;top:3.0px" width="16" height="16.5" viewBox="0 0 16 16.5"><defs><radialGradient id="gp" cx="40%" cy="30%" r="75%"><stop offset="0" stop-color="#d8ff40"/><stop offset=".6" stop-color="#8ae010"/><stop offset="1" stop-color="#5aa808"/></radialGradient></defs><circle cx="8" cy="4" r="3.8" fill="url(#gp)"/><path d="M.6 12.6 Q.6 7.6 5 7.6 L11 7.6 Q15.4 7.6 15.4 12.6 Q15.4 16 8 16 Q.6 16 .6 12.6Z" fill="url(#gp)"/></svg>
<div class="abs" style="left:578px;top:2px;width:49px;height:20px;background:#000"></div>
<svg class="abs" style="left:628.0px;top:3.5px" width="8" height="4.5" viewBox="0 0 8 4.5"><path d="M0 4.5 L4 0 L8 4.5Z" fill="#000"/></svg>
<svg class="abs" style="left:629.0px;top:9.5px" width="6" height="11" viewBox="0 0 6 11"><rect x="0" y="0" width="1" height="11" fill="#b4b2b0"/><rect x="2" y="0" width="1" height="11" fill="#b4b2b0"/><rect x="4" y="0" width="1" height="11" fill="#b4b2b0"/><rect x="1" y="0" width="1" height="11" fill="#fff"/><rect x="3" y="0" width="1" height="11" fill="#fff"/></svg>
<div class="abs" style="left:636px;top:2px;width:74px;height:20px;background:#d2d6e2"></div>
<div class="abs" style="left:646.5px;top:1px;font:19px 'DejaVu Sans Mono','Liberation Mono',monospace;line-height:22px;color:#5a6292;-webkit-text-stroke:.4px #5a6292;white-space:pre;transform-origin:0 0;transform:scaleX(0.718)">2:21:04</div>
</div>
<div id="ext">
<svg class="abs" style="left:2px;top:2px" width="7" height="8" viewBox="0 0 7 8"><path d="M6.5 0 L6.5 8 L.5 4Z" fill="#000"/></svg><div class="abs" style="left:1px;top:10px;width:23px;height:2px;background:#444"></div><div class="abs" style="left:1px;top:12px;width:23px;height:20px;background:linear-gradient(to bottom,#f4f4f6,#dcdde2);box-shadow:inset 1px 1px 0 #9a9aa0,inset -1px -1px 0 #fff"></div><div class="abs" style="left:1px;top:32px;width:23px;height:1px;background:#b8b6b4"></div><div class="abs" style="left:1px;top:33px;width:23px;height:20px;background:linear-gradient(to bottom,#fafafa,#e4e4e6)"></div><div class="abs" style="left:1px;top:53px;width:23px;height:1px;background:#b8b6b4"></div><div class="abs" style="left:1px;top:54px;width:23px;height:19px;background:linear-gradient(to bottom,#fafafa,#e8e8ea)"></div><svg class="abs" style="left:3px;top:14px" width="17" height="16" viewBox="0 0 16 16"><use href="#folder"/></svg><svg class="abs" style="left:4px;top:34px" width="14" height="18" viewBox="0 0 14 18"><path d="M2 1 L12 1 L12 4 L8 9 L12 14 L12 17 L2 17 L2 14 L6 9 L2 4Z" fill="#111"/><path d="M3.4 1.6 L10.6 1.6 L7 8Z" fill="#f09040"/><path d="M7 10 L10 15.6 L4 15.6Z" fill="#d8d8d8"/><path d="M1 5 L4 3 L5 12 L2 13Z M13 5 L10 3 L9 12 L12 13Z" fill="#1aa82a"/><path d="M5 15 L7 10" stroke="#40d0f0" stroke-width="1"/><circle cx="10.6" cy="5" r="1" fill="#e82020"/></svg><svg class="abs" style="left:3px;top:55px" width="18" height="17" viewBox="0 0 17 17"><path d="M1 9 L6.4 1.6 L10 4 L5 12.6Z" fill="#f0f0ff" stroke="#6a6ae0" stroke-width=".8"/><path d="M2.6 8.6 L6 6.4 L6.6 9.6" fill="none" stroke="#8a8ae8" stroke-width=".6"/><path d="M8 2 L15 4.6 L15 7 L9.6 5.6Z M9 6.6 L16 9 L16 11.6 L10 9.6Z M8 11 L15 13.4 L15 16 L9 14Z" fill="#f8a020" stroke="#e07800" stroke-width=".5"/></svg></div>

</div>
</body></html>
